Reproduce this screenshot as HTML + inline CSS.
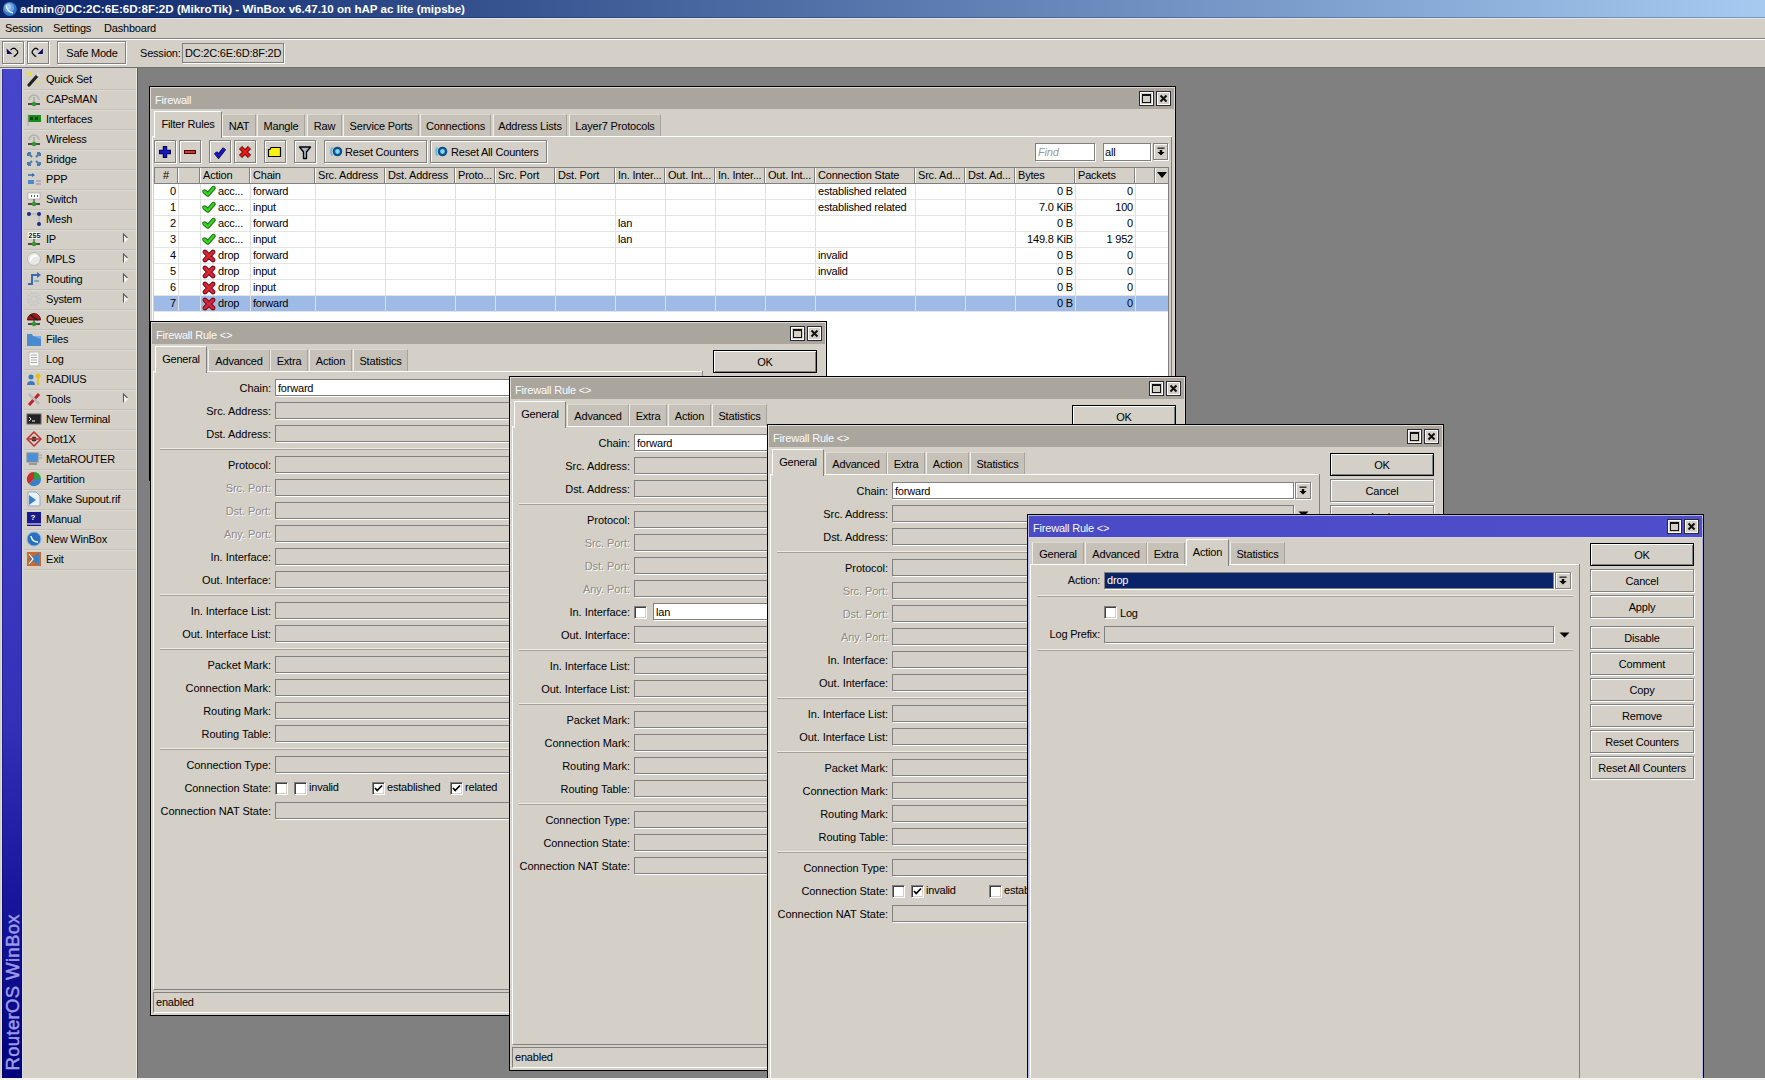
<!DOCTYPE html>
<html><head><meta charset="utf-8"><style>
html,body{margin:0;padding:0;width:1765px;height:1080px;overflow:hidden;background:#808080;}
body{position:relative;font-family:"Liberation Sans",sans-serif;font-size:11px;color:#000;}
div{position:absolute;box-sizing:border-box;}
.t{white-space:nowrap;letter-spacing:-0.2px;line-height:13px;}
svg{position:absolute;}

</style></head><body>
<div style="left:0px;top:0px;width:1765px;height:18px;background:linear-gradient(90deg,#0a246a 0%,#a6caf0 100%);box-shadow:inset 0 -1px 0 rgba(0,0,40,0.25);"></div>
<svg style="left:2px;top:1px" width="16" height="16" viewBox="0 0 16 16"><circle cx="7.8" cy="8" r="7" fill="#3574c4"/><circle cx="7" cy="6.8" r="5" fill="#6aa4e4"/><circle cx="6.4" cy="5.8" r="2.8" fill="#9cc8f4"/><path d="M4.2 4.5 Q5 10.5 11 12" stroke="#eef6ff" stroke-width="1.3" fill="none"/></svg>
<div class="t" style="left:20px;top:2px;color:#fff;font-weight:bold;font-size:11.6px;letter-spacing:0px;">admin@DC:2C:6E:6D:8F:2D (MikroTik) - WinBox v6.47.10 on hAP ac lite (mipsbe)</div>
<div style="left:0px;top:18px;width:1765px;height:20px;background:#d4d0c8;border-top:1px solid #e4e2ee;"></div>
<div class="t" style="left:5px;top:21.5px;">Session</div>
<div class="t" style="left:53px;top:21.5px;">Settings</div>
<div class="t" style="left:104px;top:21.5px;">Dashboard</div>
<div style="left:0px;top:38px;width:1765px;height:1px;background:#808080;"></div>
<div style="left:0px;top:39px;width:1765px;height:1px;background:#fff;"></div>
<div style="left:0px;top:40px;width:1765px;height:27px;background:#d4d0c8;"></div>
<div style="left:2px;top:41px;width:22px;height:23px;background:#d4d0c8;border:1px solid #808080;box-shadow:inset 1px 1px 0 #fff,1px 1px 0 #fff;"></div>
<div style="left:27px;top:41px;width:22px;height:23px;background:#d4d0c8;border:1px solid #808080;box-shadow:inset 1px 1px 0 #fff,1px 1px 0 #fff;"></div>
<svg style="left:4px;top:45px" width="16" height="16" viewBox="0 0 16 16"><path d="M2.6 3.6 L3.0 9 L8.4 9 Z" fill="#0a0a6a"/><path d="M6.6 5 L8.7 3.3 L10.7 3.3 L13.6 6.2 L13.7 8 L11 10.9 L9.6 11.5" stroke="#000" stroke-width="1.2" fill="none"/></svg>
<svg style="left:29px;top:45px" width="16" height="16" viewBox="0 0 16 16"><path d="M14.1 3.6 L13.8 9 L8.5 9 Z" fill="#0a0a6a"/><path d="M9.3 5 L7.6 3.3 L5.8 3.3 L3.2 6.2 L3.2 8 L5.8 10.9 L7.3 11.5" stroke="#000" stroke-width="1.2" fill="none"/></svg>
<div style="left:57px;top:41px;width:69px;height:23px;background:#d4d0c8;border:1px solid #808080;box-shadow:inset 1px 1px 0 #fff,1px 1px 0 #fff;"></div>
<div class="t" style="left:57px;top:47px;width:70px;text-align:center;">Safe Mode</div>
<div class="t" style="left:140px;top:47px;">Session:</div>
<div style="left:182px;top:43px;width:102px;height:20px;background:#d4d0c8;border:1px solid #808080;box-shadow:1px 1px 0 #fff;"></div>
<div class="t" style="left:185px;top:47px;">DC:2C:6E:6D:8F:2D</div>
<div style="left:0px;top:67px;width:1765px;height:1px;background:#747270;"></div>
<div style="left:0px;top:68px;width:138px;height:1010px;background:#d4d0c8;border-right:1px solid #5a5a5a;box-shadow:inset -1px 0 0 #e8e6e0;"></div>
<div style="left:1px;top:68px;width:22px;height:1010px;background:#dcdcf4;"></div>
<div style="left:2px;top:69px;width:20px;height:1009px;background:linear-gradient(180deg,#4646cc 0%,#4040c8 33%,#3331b8 64.6%,#17159a 82.4%,#02027c 100%);box-shadow:inset 1px 0 0 rgba(0,0,60,0.35),inset -1px 0 0 rgba(0,0,60,0.35);"></div>
<div class="t" style="left:-68px;top:982px;width:160px;height:17px;line-height:17px;transform:rotate(-90deg);transform-origin:center;color:#9c9ce6;-webkit-text-stroke:0.5px #9c9ce6;font-size:18.6px;letter-spacing:0.3px;">RouterOS WinBox</div>
<div class="t" style="left:46px;top:72.5px;">Quick Set</div>
<div style="left:24px;top:89px;width:112px;height:1px;background:#c4c0b8;"></div>
<div style="left:24px;top:90px;width:112px;height:1px;background:#dcdad4;"></div>
<div class="t" style="left:46px;top:92.5px;">CAPsMAN</div>
<div style="left:24px;top:109px;width:112px;height:1px;background:#c4c0b8;"></div>
<div style="left:24px;top:110px;width:112px;height:1px;background:#dcdad4;"></div>
<div class="t" style="left:46px;top:112.5px;">Interfaces</div>
<div style="left:24px;top:129px;width:112px;height:1px;background:#c4c0b8;"></div>
<div style="left:24px;top:130px;width:112px;height:1px;background:#dcdad4;"></div>
<div class="t" style="left:46px;top:132.5px;">Wireless</div>
<div style="left:24px;top:149px;width:112px;height:1px;background:#c4c0b8;"></div>
<div style="left:24px;top:150px;width:112px;height:1px;background:#dcdad4;"></div>
<div class="t" style="left:46px;top:152.5px;">Bridge</div>
<div style="left:24px;top:169px;width:112px;height:1px;background:#c4c0b8;"></div>
<div style="left:24px;top:170px;width:112px;height:1px;background:#dcdad4;"></div>
<div class="t" style="left:46px;top:172.5px;">PPP</div>
<div style="left:24px;top:189px;width:112px;height:1px;background:#c4c0b8;"></div>
<div style="left:24px;top:190px;width:112px;height:1px;background:#dcdad4;"></div>
<div class="t" style="left:46px;top:192.5px;">Switch</div>
<div style="left:24px;top:209px;width:112px;height:1px;background:#c4c0b8;"></div>
<div style="left:24px;top:210px;width:112px;height:1px;background:#dcdad4;"></div>
<div class="t" style="left:46px;top:212.5px;">Mesh</div>
<div style="left:24px;top:229px;width:112px;height:1px;background:#c4c0b8;"></div>
<div style="left:24px;top:230px;width:112px;height:1px;background:#dcdad4;"></div>
<div class="t" style="left:46px;top:232.5px;">IP</div>
<div style="left:24px;top:249px;width:112px;height:1px;background:#c4c0b8;"></div>
<div style="left:24px;top:250px;width:112px;height:1px;background:#dcdad4;"></div>
<svg style="left:122px;top:233px" width="8" height="11" viewBox="0 0 8 11"><path d="M1.5 10 L6 5.5 L1.5 1 Z" fill="#f6f4f0"/><path d="M1.5 10 V1 L5.5 5" stroke="#5a5a5a" stroke-width="1.1" fill="none"/><path d="M1.5 10 L6 5.5" stroke="#fff" stroke-width="1"/></svg>
<div class="t" style="left:46px;top:252.5px;">MPLS</div>
<div style="left:24px;top:269px;width:112px;height:1px;background:#c4c0b8;"></div>
<div style="left:24px;top:270px;width:112px;height:1px;background:#dcdad4;"></div>
<svg style="left:122px;top:253px" width="8" height="11" viewBox="0 0 8 11"><path d="M1.5 10 L6 5.5 L1.5 1 Z" fill="#f6f4f0"/><path d="M1.5 10 V1 L5.5 5" stroke="#5a5a5a" stroke-width="1.1" fill="none"/><path d="M1.5 10 L6 5.5" stroke="#fff" stroke-width="1"/></svg>
<div class="t" style="left:46px;top:272.5px;">Routing</div>
<div style="left:24px;top:289px;width:112px;height:1px;background:#c4c0b8;"></div>
<div style="left:24px;top:290px;width:112px;height:1px;background:#dcdad4;"></div>
<svg style="left:122px;top:273px" width="8" height="11" viewBox="0 0 8 11"><path d="M1.5 10 L6 5.5 L1.5 1 Z" fill="#f6f4f0"/><path d="M1.5 10 V1 L5.5 5" stroke="#5a5a5a" stroke-width="1.1" fill="none"/><path d="M1.5 10 L6 5.5" stroke="#fff" stroke-width="1"/></svg>
<div class="t" style="left:46px;top:292.5px;">System</div>
<div style="left:24px;top:309px;width:112px;height:1px;background:#c4c0b8;"></div>
<div style="left:24px;top:310px;width:112px;height:1px;background:#dcdad4;"></div>
<svg style="left:122px;top:293px" width="8" height="11" viewBox="0 0 8 11"><path d="M1.5 10 L6 5.5 L1.5 1 Z" fill="#f6f4f0"/><path d="M1.5 10 V1 L5.5 5" stroke="#5a5a5a" stroke-width="1.1" fill="none"/><path d="M1.5 10 L6 5.5" stroke="#fff" stroke-width="1"/></svg>
<div class="t" style="left:46px;top:312.5px;">Queues</div>
<div style="left:24px;top:329px;width:112px;height:1px;background:#c4c0b8;"></div>
<div style="left:24px;top:330px;width:112px;height:1px;background:#dcdad4;"></div>
<div class="t" style="left:46px;top:332.5px;">Files</div>
<div style="left:24px;top:349px;width:112px;height:1px;background:#c4c0b8;"></div>
<div style="left:24px;top:350px;width:112px;height:1px;background:#dcdad4;"></div>
<div class="t" style="left:46px;top:352.5px;">Log</div>
<div style="left:24px;top:369px;width:112px;height:1px;background:#c4c0b8;"></div>
<div style="left:24px;top:370px;width:112px;height:1px;background:#dcdad4;"></div>
<div class="t" style="left:46px;top:372.5px;">RADIUS</div>
<div style="left:24px;top:389px;width:112px;height:1px;background:#c4c0b8;"></div>
<div style="left:24px;top:390px;width:112px;height:1px;background:#dcdad4;"></div>
<div class="t" style="left:46px;top:392.5px;">Tools</div>
<div style="left:24px;top:409px;width:112px;height:1px;background:#c4c0b8;"></div>
<div style="left:24px;top:410px;width:112px;height:1px;background:#dcdad4;"></div>
<svg style="left:122px;top:393px" width="8" height="11" viewBox="0 0 8 11"><path d="M1.5 10 L6 5.5 L1.5 1 Z" fill="#f6f4f0"/><path d="M1.5 10 V1 L5.5 5" stroke="#5a5a5a" stroke-width="1.1" fill="none"/><path d="M1.5 10 L6 5.5" stroke="#fff" stroke-width="1"/></svg>
<div class="t" style="left:46px;top:412.5px;">New Terminal</div>
<div style="left:24px;top:429px;width:112px;height:1px;background:#c4c0b8;"></div>
<div style="left:24px;top:430px;width:112px;height:1px;background:#dcdad4;"></div>
<div class="t" style="left:46px;top:432.5px;">Dot1X</div>
<div style="left:24px;top:449px;width:112px;height:1px;background:#c4c0b8;"></div>
<div style="left:24px;top:450px;width:112px;height:1px;background:#dcdad4;"></div>
<div class="t" style="left:46px;top:452.5px;">MetaROUTER</div>
<div style="left:24px;top:469px;width:112px;height:1px;background:#c4c0b8;"></div>
<div style="left:24px;top:470px;width:112px;height:1px;background:#dcdad4;"></div>
<div class="t" style="left:46px;top:472.5px;">Partition</div>
<div style="left:24px;top:489px;width:112px;height:1px;background:#c4c0b8;"></div>
<div style="left:24px;top:490px;width:112px;height:1px;background:#dcdad4;"></div>
<div class="t" style="left:46px;top:492.5px;">Make Supout.rif</div>
<div style="left:24px;top:509px;width:112px;height:1px;background:#c4c0b8;"></div>
<div style="left:24px;top:510px;width:112px;height:1px;background:#dcdad4;"></div>
<div class="t" style="left:46px;top:512.5px;">Manual</div>
<div style="left:24px;top:529px;width:112px;height:1px;background:#c4c0b8;"></div>
<div style="left:24px;top:530px;width:112px;height:1px;background:#dcdad4;"></div>
<div class="t" style="left:46px;top:532.5px;">New WinBox</div>
<div style="left:24px;top:549px;width:112px;height:1px;background:#c4c0b8;"></div>
<div style="left:24px;top:550px;width:112px;height:1px;background:#dcdad4;"></div>
<div class="t" style="left:46px;top:552.5px;">Exit</div>
<div style="left:24px;top:569px;width:112px;height:1px;background:#c4c0b8;"></div>
<div style="left:24px;top:570px;width:112px;height:1px;background:#dcdad4;"></div>
<svg style="left:26px;top:71px" width="16" height="16" viewBox="0 0 16 16"><path d="M3 14 L11 5" stroke="#222" stroke-width="3.2" stroke-linecap="round"/><path d="M11 5 L13 3" stroke="#ddd" stroke-width="3"/><circle cx="4" cy="3" r="2" fill="#e8e030"/><circle cx="12" cy="12" r="1.3" fill="#e8e030"/></svg>
<svg style="left:26px;top:91px" width="16" height="16" viewBox="0 0 16 16"><path d="M3 9 A5 5 0 0 1 13 9" stroke="#b0b0b0" stroke-width="1.5" fill="none"/><path d="M8 6 L8 12" stroke="#999" stroke-width="1"/><path d="M2 13 L14 13" stroke="#222" stroke-width="1.5"/><circle cx="8" cy="13" r="2.2" fill="#2a9a2a"/></svg>
<svg style="left:26px;top:111px" width="16" height="16" viewBox="0 0 16 16"><rect x="2" y="4" width="13" height="7" fill="#1a8a1a"/><rect x="4" y="6" width="3" height="3" fill="#0a4a0a"/><rect x="9" y="6" width="3" height="3" fill="#0a4a0a"/><path d="M2 3 L2 15" stroke="#aaa"/></svg>
<svg style="left:26px;top:131px" width="16" height="16" viewBox="0 0 16 16"><path d="M3 9 A5 5 0 0 1 13 9" stroke="#b0b0b0" stroke-width="1.5" fill="none"/><path d="M8 6 L8 12" stroke="#999" stroke-width="1"/><path d="M2 13 L14 13" stroke="#222" stroke-width="1.5"/><circle cx="8" cy="13" r="2.2" fill="#2a9a2a"/></svg>
<svg style="left:26px;top:151px" width="16" height="16" viewBox="0 0 16 16"><path d="M2 2 L6 6 M14 2 L10 6 M2 14 L6 10 M14 14 L10 10" stroke="#4a7ab0" stroke-width="2"/><path d="M2 2 L5 2 M2 2 L2 5 M14 2 L11 2 M14 2 L14 5 M2 14 L5 14 M2 14 L2 11 M14 14 L11 14 M14 14 L14 11" stroke="#4a7ab0" stroke-width="2"/></svg>
<svg style="left:26px;top:171px" width="16" height="16" viewBox="0 0 16 16"><path d="M2 4 L8 4" stroke="#3a6ab0" stroke-width="1.5"/><path d="M6 2 L9 4 L6 6" fill="#3a6ab0"/><rect x="2" y="9" width="6" height="4" fill="#4a8ad0"/><path d="M10 10 L15 10 M10 13 L15 13" stroke="#88a" stroke-width="1"/></svg>
<svg style="left:26px;top:191px" width="16" height="16" viewBox="0 0 16 16"><rect x="2" y="2" width="12" height="6" fill="#fff" stroke="#aaa" stroke-width="0.8"/><path d="M5 5 L6 5 M8 5 L9 5 M11 5 L12 5" stroke="#222" stroke-width="1.5"/><path d="M8 8 L8 12" stroke="#333"/><path d="M2 13 L14 13" stroke="#222" stroke-width="1.5"/><circle cx="8" cy="13" r="2.2" fill="#2a9a2a"/></svg>
<svg style="left:26px;top:211px" width="16" height="16" viewBox="0 0 16 16"><circle cx="3" cy="3" r="2" fill="#1a2a8a"/><circle cx="13" cy="3" r="2" fill="#1a2a8a"/><circle cx="13" cy="13" r="2" fill="#1a2a8a"/><path d="M5 3 L11 3 M13 5 L13 11" stroke="#aab" stroke-width="1"/></svg>
<svg style="left:26px;top:231px" width="16" height="16" viewBox="0 0 16 16"><rect x="1.5" y="1" width="13" height="7" fill="#fff" stroke="#ccc" stroke-width="0.6"/><text x="2.2" y="7.2" font-size="7" font-family="Liberation Mono" font-weight="bold" fill="#111">255</text><path d="M8 8 L8 12" stroke="#333"/><path d="M2 13 L14 13" stroke="#222" stroke-width="1.5"/><circle cx="8" cy="13" r="2.2" fill="#2a9a2a"/></svg>
<svg style="left:26px;top:251px" width="16" height="16" viewBox="0 0 16 16"><ellipse cx="8" cy="8" rx="6.5" ry="6.5" fill="#e8e8e8" stroke="#bbb"/><path d="M4 10 Q6 4 11 5" stroke="#fff" stroke-width="2" fill="none"/></svg>
<svg style="left:26px;top:271px" width="16" height="16" viewBox="0 0 16 16"><path d="M2 13 L6 13 L6 4 L12 4" stroke="#3a6ab0" stroke-width="2" fill="none"/><path d="M11 1 L15 4 L11 7 Z" fill="#3a6ab0"/><path d="M8 10 L13 10" stroke="#8ab" stroke-width="2"/></svg>
<svg style="left:26px;top:291px" width="16" height="16" viewBox="0 0 16 16"><circle cx="8" cy="8" r="6" fill="none" stroke="#c8c8c8" stroke-width="2.5" stroke-dasharray="2 1.5"/><circle cx="8" cy="8" r="3" fill="none" stroke="#c8c8c8" stroke-width="1.5"/></svg>
<svg style="left:26px;top:311px" width="16" height="16" viewBox="0 0 16 16"><path d="M1.5 9 A6.5 6.5 0 0 1 14.5 9 Z" fill="#b01818" stroke="#300" stroke-width="0.8"/><path d="M4 4 L12 9" stroke="#222" stroke-width="1.6"/><path d="M8 8 L8 12" stroke="#333"/><path d="M2 13 L14 13" stroke="#222" stroke-width="1.5"/><circle cx="8" cy="13" r="2.2" fill="#2a9a2a"/></svg>
<svg style="left:26px;top:331px" width="16" height="16" viewBox="0 0 16 16"><path d="M1 3 L6 3 L7 5 L15 5 L15 15 L1 15 Z" fill="#4a8ad0"/><path d="M7 5 L15 5 L15 8 Z" fill="#7ab0e8"/></svg>
<svg style="left:26px;top:351px" width="16" height="16" viewBox="0 0 16 16"><rect x="3" y="1" width="10" height="14" fill="#f8f8f8" stroke="#bbb"/><path d="M5 4 H11 M5 6.5 H11 M5 9 H11 M5 11.5 H11" stroke="#aaa"/></svg>
<svg style="left:26px;top:371px" width="16" height="16" viewBox="0 0 16 16"><circle cx="5" cy="6" r="2.5" fill="#3a7ac0"/><path d="M1 14 A4 4 0 0 1 9 14 Z" fill="#3a7ac0"/><circle cx="12" cy="5" r="2.5" fill="#e8c020"/><path d="M12 7 L12 14" stroke="#e8c020" stroke-width="2"/></svg>
<svg style="left:26px;top:391px" width="16" height="16" viewBox="0 0 16 16"><path d="M3 14 L13 3" stroke="#c02030" stroke-width="3"/><path d="M3 3 L13 13" stroke="#b8b8b8" stroke-width="2.5"/></svg>
<svg style="left:26px;top:411px" width="16" height="16" viewBox="0 0 16 16"><rect x="1" y="3" width="14" height="10" fill="#222" stroke="#666"/><path d="M3 6 L5 8 L3 10 M6 10 H9" stroke="#fff" stroke-width="1"/></svg>
<svg style="left:26px;top:431px" width="16" height="16" viewBox="0 0 16 16"><path d="M8 1 L15 8 L8 15 L1 8 Z" fill="none" stroke="#c03030" stroke-width="1.5"/><circle cx="8" cy="8" r="2.5" fill="#333"/><path d="M1 8 H15" stroke="#c03030" stroke-width="1.5"/></svg>
<svg style="left:26px;top:451px" width="16" height="16" viewBox="0 0 16 16"><rect x="1" y="2" width="11" height="9" fill="#4a90d8" stroke="#888"/><path d="M3 13 H11" stroke="#888" stroke-width="1.5"/><path d="M13 4 H16 M13 7 H16" stroke="#999"/></svg>
<svg style="left:26px;top:471px" width="16" height="16" viewBox="0 0 16 16"><path d="M8 8 L8 1 A7 7 0 0 1 15 8 Z" fill="#30a030"/><path d="M8 8 L15 8 A7 7 0 0 1 3 13 Z" fill="#3a80c8"/><path d="M8 8 L3 13 A7 7 0 0 1 8 1 Z" fill="#c83030"/></svg>
<svg style="left:26px;top:491px" width="16" height="16" viewBox="0 0 16 16"><path d="M2 1 L10 1 L14 5 L14 15 L2 15 Z" fill="#e8f0f8" stroke="#9ab"/><path d="M3 4 L10 9 L3 14 Z" fill="#3a80c8"/></svg>
<svg style="left:26px;top:511px" width="16" height="16" viewBox="0 0 16 16"><rect x="1" y="1" width="14" height="12" fill="#1a1a8a"/><rect x="1" y="13" width="14" height="2" fill="#1a1a8a"/><path d="M1 13 H15" stroke="#fff"/><text x="4.5" y="9" font-size="8" font-family="Liberation Sans" font-weight="bold" fill="#fff">?</text></svg>
<svg style="left:26px;top:531px" width="16" height="16" viewBox="0 0 16 16"><circle cx="8" cy="8" r="7" fill="#2a70c0"/><circle cx="8" cy="8" r="7" fill="none" stroke="#8ab8e8"/><path d="M5 5 Q6 11 12 11" stroke="#fff" stroke-width="1.5" fill="none"/></svg>
<svg style="left:26px;top:551px" width="16" height="16" viewBox="0 0 16 16"><rect x="1" y="1" width="14" height="14" fill="#c86a30"/><path d="M3 8 L13 2 L13 14 Z" fill="#3a80c8"/><path d="M3 3 L7 8 L3 13" stroke="#fff" stroke-width="1.2" fill="none"/></svg>
<div style="left:149px;top:86px;width:1027px;height:395px;background:#d4d0c8;border:1px solid #000;"></div>
<div style="left:150px;top:87px;width:1025px;height:1px;background:#dedad2;"></div>
<div style="left:150px;top:87px;width:1px;height:393px;background:#dedad2;"></div>
<div style="left:1174px;top:87px;width:1px;height:393px;background:#dedad2;"></div>
<div style="left:151px;top:88px;width:1023px;height:21px;background:#aaa69e;"></div>
<div class="t" style="left:155px;top:94px;color:#fafafa;">Firewall</div>
<div style="left:1139px;top:91px;width:15px;height:15px;background:#d4d0c8;border:1px solid #2a2a34;box-shadow:inset 0 0 0 1px #fff;"></div>
<svg style="left:1139px;top:91px" width="15" height="15" viewBox="0 0 15 15"><rect x="3.5" y="4" width="8" height="7.5" fill="none" stroke="#111" stroke-width="1"/><path d="M3 4 H12" stroke="#111" stroke-width="2"/></svg>
<div style="left:1156px;top:91px;width:15px;height:15px;background:#d4d0c8;border:1px solid #2a2a34;box-shadow:inset 0 0 0 1px #fff;"></div>
<svg style="left:1156px;top:91px" width="15" height="15" viewBox="0 0 15 15"><path d="M4.5 4.5 L10.5 10.5 M10.5 4.5 L4.5 10.5" stroke="#111" stroke-width="2"/></svg>
<div style="left:152px;top:136px;width:1020px;height:330px;background:#d4d0c8;border-left:1px solid #fff;border-right:1px solid #808080;"></div>
<div style="left:152px;top:136px;width:3px;height:1px;background:#fff;"></div>
<div style="left:221px;top:136px;width:951px;height:1px;background:#fff;"></div>
<div style="left:222px;top:114px;width:34px;height:22px;background:#c6c2ba;border-left:1px solid #f0eee8;border-top:1px solid #dcd8d0;border-right:1px solid #a8a49c;"></div>
<div class="t" style="left:222px;top:119.5px;width:34px;text-align:center;">NAT</div>
<div style="left:257px;top:114px;width:48px;height:22px;background:#c6c2ba;border-left:1px solid #f0eee8;border-top:1px solid #dcd8d0;border-right:1px solid #a8a49c;"></div>
<div class="t" style="left:257px;top:119.5px;width:48px;text-align:center;">Mangle</div>
<div style="left:307px;top:114px;width:35px;height:22px;background:#c6c2ba;border-left:1px solid #f0eee8;border-top:1px solid #dcd8d0;border-right:1px solid #a8a49c;"></div>
<div class="t" style="left:307px;top:119.5px;width:35px;text-align:center;">Raw</div>
<div style="left:343px;top:114px;width:76px;height:22px;background:#c6c2ba;border-left:1px solid #f0eee8;border-top:1px solid #dcd8d0;border-right:1px solid #a8a49c;"></div>
<div class="t" style="left:343px;top:119.5px;width:76px;text-align:center;">Service Ports</div>
<div style="left:420px;top:114px;width:71px;height:22px;background:#c6c2ba;border-left:1px solid #f0eee8;border-top:1px solid #dcd8d0;border-right:1px solid #a8a49c;"></div>
<div class="t" style="left:420px;top:119.5px;width:71px;text-align:center;">Connections</div>
<div style="left:493px;top:114px;width:74px;height:22px;background:#c6c2ba;border-left:1px solid #f0eee8;border-top:1px solid #dcd8d0;border-right:1px solid #a8a49c;"></div>
<div class="t" style="left:493px;top:119.5px;width:74px;text-align:center;">Address Lists</div>
<div style="left:569px;top:114px;width:92px;height:22px;background:#c6c2ba;border-left:1px solid #f0eee8;border-top:1px solid #dcd8d0;border-right:1px solid #a8a49c;"></div>
<div class="t" style="left:569px;top:119.5px;width:92px;text-align:center;">Layer7 Protocols</div>
<div style="left:154px;top:111px;width:68px;height:27px;background:#d4d0c8;border-left:1px solid #fff;border-top:1px solid #fff;border-right:1px solid #808080;"></div>
<div class="t" style="left:154px;top:117.5px;width:68px;text-align:center;">Filter Rules</div>
<div style="left:154px;top:140px;width:22px;height:23px;background:#d4d0c8;border:1px solid #808080;box-shadow:inset 1px 1px 0 #fff,1px 1px 0 #fff;"></div>
<div style="left:179px;top:140px;width:22px;height:23px;background:#d4d0c8;border:1px solid #808080;box-shadow:inset 1px 1px 0 #fff,1px 1px 0 #fff;"></div>
<div style="left:209px;top:140px;width:22px;height:23px;background:#d4d0c8;border:1px solid #808080;box-shadow:inset 1px 1px 0 #fff,1px 1px 0 #fff;"></div>
<div style="left:234px;top:140px;width:22px;height:23px;background:#d4d0c8;border:1px solid #808080;box-shadow:inset 1px 1px 0 #fff,1px 1px 0 #fff;"></div>
<div style="left:264px;top:140px;width:22px;height:23px;background:#d4d0c8;border:1px solid #808080;box-shadow:inset 1px 1px 0 #fff,1px 1px 0 #fff;"></div>
<div style="left:294px;top:140px;width:22px;height:23px;background:#d4d0c8;border:1px solid #808080;box-shadow:inset 1px 1px 0 #fff,1px 1px 0 #fff;"></div>
<div style="left:324px;top:140px;width:103px;height:23px;background:#d4d0c8;border:1px solid #808080;box-shadow:inset 1px 1px 0 #fff,1px 1px 0 #fff;"></div>
<div style="left:430px;top:140px;width:117px;height:23px;background:#d4d0c8;border:1px solid #808080;box-shadow:inset 1px 1px 0 #fff,1px 1px 0 #fff;"></div>
<svg style="left:157px;top:144px" width="16" height="16" viewBox="0 0 16 16"><path d="M8 2 V14 M2 8 H14" stroke="#000050" stroke-width="4.4"/><path d="M8 3 V13 M3 8 H13" stroke="#1818c8" stroke-width="2.4"/></svg>
<svg style="left:182px;top:144px" width="16" height="16" viewBox="0 0 16 16"><rect x="2.5" y="6.5" width="11" height="3" fill="#c04040" stroke="#500000" stroke-width="1"/></svg>
<svg style="left:212px;top:144px" width="16" height="16" viewBox="0 0 16 16"><path d="M3.5 8.5 L6.5 12 L12.5 4.5" stroke="#000060" stroke-width="4" fill="none"/><path d="M3.5 8.5 L6.5 12 L12.5 4.5" stroke="#1a1ac0" stroke-width="2.4" fill="none"/></svg>
<svg style="left:237px;top:144px" width="16" height="16" viewBox="0 0 16 16"><path d="M3.5 3.5 L12.5 12.5 M12.5 3.5 L3.5 12.5" stroke="#600000" stroke-width="4.4"/><path d="M3.8 3.8 L12.2 12.2 M12.2 3.8 L3.8 12.2" stroke="#e81818" stroke-width="2.6"/></svg>
<svg style="left:267px;top:144px" width="16" height="16" viewBox="0 0 16 16"><path d="M1.5 5.5 L3 5.5 L4 3.5 L13.5 3.5 L13.5 12.5 L1.5 12.5 Z" fill="#f8f010" stroke="#000" stroke-width="1.2"/></svg>
<svg style="left:297px;top:144px" width="16" height="16" viewBox="0 0 16 16"><path d="M2.5 3 H13.5 L9.5 8 V14.5 H6.5 V8 Z" fill="#aab4c8" stroke="#000" stroke-width="1.3" stroke-linejoin="round"/></svg>
<svg style="left:328px;top:144px" width="16" height="16" viewBox="0 0 16 16"><circle cx="9.5" cy="7.5" r="3.6" fill="#7ad8f8" stroke="#10508a" stroke-width="2.4"/><path d="M4.5 3.5 A6 6 0 0 0 4.5 11.5" stroke="#68b8e8" stroke-width="2" fill="none"/></svg>
<svg style="left:433px;top:144px" width="16" height="16" viewBox="0 0 16 16"><circle cx="9.5" cy="7.5" r="3.6" fill="#7ad8f8" stroke="#10508a" stroke-width="2.4"/><path d="M4.5 3.5 A6 6 0 0 0 4.5 11.5" stroke="#68b8e8" stroke-width="2" fill="none"/></svg>
<div class="t" style="left:345px;top:145.5px;">Reset Counters</div>
<div class="t" style="left:451px;top:145.5px;">Reset All Counters</div>
<div style="left:1035px;top:143px;width:60px;height:18px;background:#fff;border:1px solid #808080;box-shadow:1px 1px 0 #fff;"></div>
<div class="t" style="left:1038px;top:146px;color:#9a9a9a;font-style:italic;">Find</div>
<div style="left:1103px;top:143px;width:48px;height:18px;background:#fff;border:1px solid #808080;box-shadow:1px 1px 0 #fff;"></div>
<div class="t" style="left:1105px;top:146px;">all</div>
<div style="left:1153px;top:143px;width:15px;height:17px;background:#d4d0c8;border:1px solid #808080;box-shadow:inset 1px 1px 0 #fff,1px 1px 0 #fff;"></div>
<svg style="left:1155px;top:145px" width="12" height="14" viewBox="0 0 12 14"><rect x="2.5" y="2.6" width="7" height="1.1" fill="#000"/><path d="M4.8 5 H7.2 V7 H9.6 L6 10.6 L2.4 7 H4.8 Z" fill="#000"/></svg>
<div style="left:154px;top:167px;width:1015px;height:300px;background:#fff;"></div>
<div style="left:154px;top:167px;width:1015px;height:17px;background:#d4d0c8;border-top:1px solid #808080;border-bottom:1px solid #808080;"></div>
<div style="left:154px;top:168px;width:24px;height:15px;border-left:1px solid #fff;border-right:1px solid #808080;"></div>
<div class="t" style="left:154px;top:169px;width:24px;text-align:center;">#</div>
<div style="left:178px;top:168px;width:22px;height:15px;border-left:1px solid #fff;border-right:1px solid #808080;"></div>
<div style="left:200px;top:168px;width:50px;height:15px;border-left:1px solid #fff;border-right:1px solid #808080;"></div>
<div class="t" style="left:203px;top:169px;">Action</div>
<div style="left:250px;top:168px;width:65px;height:15px;border-left:1px solid #fff;border-right:1px solid #808080;"></div>
<div class="t" style="left:253px;top:169px;">Chain</div>
<div style="left:315px;top:168px;width:70px;height:15px;border-left:1px solid #fff;border-right:1px solid #808080;"></div>
<div class="t" style="left:318px;top:169px;">Src. Address</div>
<div style="left:385px;top:168px;width:70px;height:15px;border-left:1px solid #fff;border-right:1px solid #808080;"></div>
<div class="t" style="left:388px;top:169px;">Dst. Address</div>
<div style="left:455px;top:168px;width:40px;height:15px;border-left:1px solid #fff;border-right:1px solid #808080;"></div>
<div class="t" style="left:458px;top:169px;">Proto...</div>
<div style="left:495px;top:168px;width:60px;height:15px;border-left:1px solid #fff;border-right:1px solid #808080;"></div>
<div class="t" style="left:498px;top:169px;">Src. Port</div>
<div style="left:555px;top:168px;width:60px;height:15px;border-left:1px solid #fff;border-right:1px solid #808080;"></div>
<div class="t" style="left:558px;top:169px;">Dst. Port</div>
<div style="left:615px;top:168px;width:50px;height:15px;border-left:1px solid #fff;border-right:1px solid #808080;"></div>
<div class="t" style="left:618px;top:169px;">In. Inter...</div>
<div style="left:665px;top:168px;width:50px;height:15px;border-left:1px solid #fff;border-right:1px solid #808080;"></div>
<div class="t" style="left:668px;top:169px;">Out. Int...</div>
<div style="left:715px;top:168px;width:50px;height:15px;border-left:1px solid #fff;border-right:1px solid #808080;"></div>
<div class="t" style="left:718px;top:169px;">In. Inter...</div>
<div style="left:765px;top:168px;width:50px;height:15px;border-left:1px solid #fff;border-right:1px solid #808080;"></div>
<div class="t" style="left:768px;top:169px;">Out. Int...</div>
<div style="left:815px;top:168px;width:100px;height:15px;border-left:1px solid #fff;border-right:1px solid #808080;"></div>
<div class="t" style="left:818px;top:169px;">Connection State</div>
<div style="left:915px;top:168px;width:50px;height:15px;border-left:1px solid #fff;border-right:1px solid #808080;"></div>
<div class="t" style="left:918px;top:169px;">Src. Ad...</div>
<div style="left:965px;top:168px;width:50px;height:15px;border-left:1px solid #fff;border-right:1px solid #808080;"></div>
<div class="t" style="left:968px;top:169px;">Dst. Ad...</div>
<div style="left:1015px;top:168px;width:60px;height:15px;border-left:1px solid #fff;border-right:1px solid #808080;"></div>
<div class="t" style="left:1018px;top:169px;">Bytes</div>
<div style="left:1075px;top:168px;width:60px;height:15px;border-left:1px solid #fff;border-right:1px solid #808080;"></div>
<div class="t" style="left:1078px;top:169px;">Packets</div>
<div style="left:1135px;top:168px;width:20px;height:15px;border-left:1px solid #fff;border-right:1px solid #808080;"></div>
<div style="left:1155px;top:168px;width:14px;height:15px;border-left:1px solid #fff;border-right:1px solid #808080;"></div>
<div style="left:154px;top:167px;width:1px;height:17px;background:#808080;"></div>
<svg style="left:1156px;top:170px" width="12" height="10" viewBox="0 0 12 10"><path d="M1 2 H11 L6 8 Z" fill="#000"/></svg>
<div style="left:154px;top:199px;width:1015px;height:1px;background:#e4e4e4;"></div>
<div class="t" style="left:154px;top:184.5px;width:22px;text-align:right;">0</div>
<svg style="left:202px;top:185px" width="14" height="13" viewBox="0 0 14 13"><path d="M2.5 6.5 L5.8 9.5 L11.5 3" stroke="#187818" stroke-width="4.4" fill="none" stroke-linejoin="round" stroke-linecap="round"/><path d="M2.5 6.5 L5.8 9.5 L11.5 3" stroke="#3cd21e" stroke-width="2.4" fill="none" stroke-linejoin="round" stroke-linecap="round"/></svg>
<div class="t" style="left:218px;top:184.5px;">acc...</div>
<div class="t" style="left:253px;top:184.5px;">forward</div>
<div class="t" style="left:818px;top:184.5px;">established related</div>
<div class="t" style="left:1015px;top:184.5px;width:58px;text-align:right;">0 B</div>
<div class="t" style="left:1075px;top:184.5px;width:58px;text-align:right;">0</div>
<div style="left:154px;top:215px;width:1015px;height:1px;background:#e4e4e4;"></div>
<div class="t" style="left:154px;top:200.5px;width:22px;text-align:right;">1</div>
<svg style="left:202px;top:201px" width="14" height="13" viewBox="0 0 14 13"><path d="M2.5 6.5 L5.8 9.5 L11.5 3" stroke="#187818" stroke-width="4.4" fill="none" stroke-linejoin="round" stroke-linecap="round"/><path d="M2.5 6.5 L5.8 9.5 L11.5 3" stroke="#3cd21e" stroke-width="2.4" fill="none" stroke-linejoin="round" stroke-linecap="round"/></svg>
<div class="t" style="left:218px;top:200.5px;">acc...</div>
<div class="t" style="left:253px;top:200.5px;">input</div>
<div class="t" style="left:818px;top:200.5px;">established related</div>
<div class="t" style="left:1015px;top:200.5px;width:58px;text-align:right;">7.0 KiB</div>
<div class="t" style="left:1075px;top:200.5px;width:58px;text-align:right;">100</div>
<div style="left:154px;top:231px;width:1015px;height:1px;background:#e4e4e4;"></div>
<div class="t" style="left:154px;top:216.5px;width:22px;text-align:right;">2</div>
<svg style="left:202px;top:217px" width="14" height="13" viewBox="0 0 14 13"><path d="M2.5 6.5 L5.8 9.5 L11.5 3" stroke="#187818" stroke-width="4.4" fill="none" stroke-linejoin="round" stroke-linecap="round"/><path d="M2.5 6.5 L5.8 9.5 L11.5 3" stroke="#3cd21e" stroke-width="2.4" fill="none" stroke-linejoin="round" stroke-linecap="round"/></svg>
<div class="t" style="left:218px;top:216.5px;">acc...</div>
<div class="t" style="left:253px;top:216.5px;">forward</div>
<div class="t" style="left:618px;top:216.5px;">lan</div>
<div class="t" style="left:1015px;top:216.5px;width:58px;text-align:right;">0 B</div>
<div class="t" style="left:1075px;top:216.5px;width:58px;text-align:right;">0</div>
<div style="left:154px;top:247px;width:1015px;height:1px;background:#e4e4e4;"></div>
<div class="t" style="left:154px;top:232.5px;width:22px;text-align:right;">3</div>
<svg style="left:202px;top:233px" width="14" height="13" viewBox="0 0 14 13"><path d="M2.5 6.5 L5.8 9.5 L11.5 3" stroke="#187818" stroke-width="4.4" fill="none" stroke-linejoin="round" stroke-linecap="round"/><path d="M2.5 6.5 L5.8 9.5 L11.5 3" stroke="#3cd21e" stroke-width="2.4" fill="none" stroke-linejoin="round" stroke-linecap="round"/></svg>
<div class="t" style="left:218px;top:232.5px;">acc...</div>
<div class="t" style="left:253px;top:232.5px;">input</div>
<div class="t" style="left:618px;top:232.5px;">lan</div>
<div class="t" style="left:1015px;top:232.5px;width:58px;text-align:right;">149.8 KiB</div>
<div class="t" style="left:1075px;top:232.5px;width:58px;text-align:right;">1 952</div>
<div style="left:154px;top:263px;width:1015px;height:1px;background:#e4e4e4;"></div>
<div class="t" style="left:154px;top:248.5px;width:22px;text-align:right;">4</div>
<svg style="left:202px;top:249px" width="14" height="14" viewBox="0 0 14 14"><path d="M3 3 L11 11 M11 3 L3 11" stroke="#700010" stroke-width="4.6" stroke-linecap="round"/><path d="M3 3 L11 11 M11 3 L3 11" stroke="#d82838" stroke-width="2.8" stroke-linecap="round"/></svg>
<div class="t" style="left:218px;top:248.5px;">drop</div>
<div class="t" style="left:253px;top:248.5px;">forward</div>
<div class="t" style="left:818px;top:248.5px;">invalid</div>
<div class="t" style="left:1015px;top:248.5px;width:58px;text-align:right;">0 B</div>
<div class="t" style="left:1075px;top:248.5px;width:58px;text-align:right;">0</div>
<div style="left:154px;top:279px;width:1015px;height:1px;background:#e4e4e4;"></div>
<div class="t" style="left:154px;top:264.5px;width:22px;text-align:right;">5</div>
<svg style="left:202px;top:265px" width="14" height="14" viewBox="0 0 14 14"><path d="M3 3 L11 11 M11 3 L3 11" stroke="#700010" stroke-width="4.6" stroke-linecap="round"/><path d="M3 3 L11 11 M11 3 L3 11" stroke="#d82838" stroke-width="2.8" stroke-linecap="round"/></svg>
<div class="t" style="left:218px;top:264.5px;">drop</div>
<div class="t" style="left:253px;top:264.5px;">input</div>
<div class="t" style="left:818px;top:264.5px;">invalid</div>
<div class="t" style="left:1015px;top:264.5px;width:58px;text-align:right;">0 B</div>
<div class="t" style="left:1075px;top:264.5px;width:58px;text-align:right;">0</div>
<div style="left:154px;top:295px;width:1015px;height:1px;background:#e4e4e4;"></div>
<div class="t" style="left:154px;top:280.5px;width:22px;text-align:right;">6</div>
<svg style="left:202px;top:281px" width="14" height="14" viewBox="0 0 14 14"><path d="M3 3 L11 11 M11 3 L3 11" stroke="#700010" stroke-width="4.6" stroke-linecap="round"/><path d="M3 3 L11 11 M11 3 L3 11" stroke="#d82838" stroke-width="2.8" stroke-linecap="round"/></svg>
<div class="t" style="left:218px;top:280.5px;">drop</div>
<div class="t" style="left:253px;top:280.5px;">input</div>
<div class="t" style="left:1015px;top:280.5px;width:58px;text-align:right;">0 B</div>
<div class="t" style="left:1075px;top:280.5px;width:58px;text-align:right;">0</div>
<div style="left:154px;top:296px;width:1015px;height:16px;background:#9dbbe6;"></div>
<div style="left:154px;top:311px;width:1015px;height:1px;background:#e4e4e4;"></div>
<div class="t" style="left:154px;top:296.5px;width:22px;text-align:right;">7</div>
<svg style="left:202px;top:297px" width="14" height="14" viewBox="0 0 14 14"><path d="M3 3 L11 11 M11 3 L3 11" stroke="#700010" stroke-width="4.6" stroke-linecap="round"/><path d="M3 3 L11 11 M11 3 L3 11" stroke="#d82838" stroke-width="2.8" stroke-linecap="round"/></svg>
<div class="t" style="left:218px;top:296.5px;">drop</div>
<div class="t" style="left:253px;top:296.5px;">forward</div>
<div class="t" style="left:1015px;top:296.5px;width:58px;text-align:right;">0 B</div>
<div class="t" style="left:1075px;top:296.5px;width:58px;text-align:right;">0</div>
<div style="left:178px;top:184px;width:1px;height:128px;background:#e0e0e0;"></div>
<div style="left:200px;top:184px;width:1px;height:128px;background:#e0e0e0;"></div>
<div style="left:250px;top:184px;width:1px;height:128px;background:#e0e0e0;"></div>
<div style="left:315px;top:184px;width:1px;height:128px;background:#e0e0e0;"></div>
<div style="left:385px;top:184px;width:1px;height:128px;background:#e0e0e0;"></div>
<div style="left:455px;top:184px;width:1px;height:128px;background:#e0e0e0;"></div>
<div style="left:495px;top:184px;width:1px;height:128px;background:#e0e0e0;"></div>
<div style="left:555px;top:184px;width:1px;height:128px;background:#e0e0e0;"></div>
<div style="left:615px;top:184px;width:1px;height:128px;background:#e0e0e0;"></div>
<div style="left:665px;top:184px;width:1px;height:128px;background:#e0e0e0;"></div>
<div style="left:715px;top:184px;width:1px;height:128px;background:#e0e0e0;"></div>
<div style="left:765px;top:184px;width:1px;height:128px;background:#e0e0e0;"></div>
<div style="left:815px;top:184px;width:1px;height:128px;background:#e0e0e0;"></div>
<div style="left:915px;top:184px;width:1px;height:128px;background:#e0e0e0;"></div>
<div style="left:965px;top:184px;width:1px;height:128px;background:#e0e0e0;"></div>
<div style="left:1015px;top:184px;width:1px;height:128px;background:#e0e0e0;"></div>
<div style="left:1075px;top:184px;width:1px;height:128px;background:#e0e0e0;"></div>
<div style="left:1135px;top:184px;width:1px;height:128px;background:#e0e0e0;"></div>
<div style="left:1168px;top:167px;width:1px;height:300px;background:#808080;"></div>
<div style="left:150px;top:321px;width:677px;height:695px;background:#d4d0c8;border:1px solid #000;"></div>
<div style="left:151px;top:322px;width:675px;height:1px;background:#dedad2;"></div>
<div style="left:151px;top:322px;width:1px;height:693px;background:#dedad2;"></div>
<div style="left:825px;top:322px;width:1px;height:693px;background:#dedad2;"></div>
<div style="left:152px;top:323px;width:673px;height:21px;background:#aaa69e;"></div>
<div class="t" style="left:156px;top:329px;color:#fafafa;">Firewall Rule &lt;&gt;</div>
<div style="left:790px;top:326px;width:15px;height:15px;background:#d4d0c8;border:1px solid #2a2a34;box-shadow:inset 0 0 0 1px #fff;"></div>
<svg style="left:790px;top:326px" width="15" height="15" viewBox="0 0 15 15"><rect x="3.5" y="4" width="8" height="7.5" fill="none" stroke="#111" stroke-width="1"/><path d="M3 4 H12" stroke="#111" stroke-width="2"/></svg>
<div style="left:807px;top:326px;width:15px;height:15px;background:#d4d0c8;border:1px solid #2a2a34;box-shadow:inset 0 0 0 1px #fff;"></div>
<svg style="left:807px;top:326px" width="15" height="15" viewBox="0 0 15 15"><path d="M4.5 4.5 L10.5 10.5 M10.5 4.5 L4.5 10.5" stroke="#111" stroke-width="2"/></svg>
<div style="left:153px;top:371px;width:550px;height:619px;background:#d4d0c8;border-left:1px solid #fff;border-right:1px solid #808080;border-bottom:1px solid #808080;"></div>
<div style="left:153px;top:371px;width:3px;height:1px;background:#fff;"></div>
<div style="left:206px;top:371px;width:496px;height:1px;background:#fff;"></div>
<div style="left:208px;top:349px;width:62px;height:22px;background:#c6c2ba;border-left:1px solid #f0eee8;border-top:1px solid #dcd8d0;border-right:1px solid #a8a49c;"></div>
<div class="t" style="left:208px;top:354.5px;width:62px;text-align:center;">Advanced</div>
<div style="left:270px;top:349px;width:38px;height:22px;background:#c6c2ba;border-left:1px solid #f0eee8;border-top:1px solid #dcd8d0;border-right:1px solid #a8a49c;"></div>
<div class="t" style="left:270px;top:354.5px;width:38px;text-align:center;">Extra</div>
<div style="left:309px;top:349px;width:43px;height:22px;background:#c6c2ba;border-left:1px solid #f0eee8;border-top:1px solid #dcd8d0;border-right:1px solid #a8a49c;"></div>
<div class="t" style="left:309px;top:354.5px;width:43px;text-align:center;">Action</div>
<div style="left:353px;top:349px;width:55px;height:22px;background:#c6c2ba;border-left:1px solid #f0eee8;border-top:1px solid #dcd8d0;border-right:1px solid #a8a49c;"></div>
<div class="t" style="left:353px;top:354.5px;width:55px;text-align:center;">Statistics</div>
<div style="left:155px;top:346px;width:52px;height:27px;background:#d4d0c8;border-left:1px solid #fff;border-top:1px solid #fff;border-right:1px solid #808080;"></div>
<div class="t" style="left:155px;top:352.5px;width:52px;text-align:center;">General</div>
<div style="left:713px;top:350px;width:104px;height:23px;background:#d4d0c8;border:1px solid #000;box-shadow:inset 1px 1px 0 #fff,inset -1px -1px 0 #808080;"></div>
<div class="t" style="left:713px;top:355.5px;width:104px;text-align:center;">OK</div>
<div style="left:713px;top:376px;width:104px;height:23px;background:#d4d0c8;border:1px solid #808080;box-shadow:inset 1px 1px 0 #fff,1px 1px 0 #fff;"></div>
<div class="t" style="left:713px;top:381.5px;width:104px;text-align:center;">Cancel</div>
<div style="left:713px;top:402px;width:104px;height:23px;background:#d4d0c8;border:1px solid #808080;box-shadow:inset 1px 1px 0 #fff,1px 1px 0 #fff;"></div>
<div class="t" style="left:713px;top:407.5px;width:104px;text-align:center;">Apply</div>
<div style="left:713px;top:433px;width:104px;height:23px;background:#d4d0c8;border:1px solid #808080;box-shadow:inset 1px 1px 0 #fff,1px 1px 0 #fff;"></div>
<div class="t" style="left:713px;top:438.5px;width:104px;text-align:center;">Disable</div>
<div style="left:713px;top:459px;width:104px;height:23px;background:#d4d0c8;border:1px solid #808080;box-shadow:inset 1px 1px 0 #fff,1px 1px 0 #fff;"></div>
<div class="t" style="left:713px;top:464.5px;width:104px;text-align:center;">Comment</div>
<div style="left:713px;top:485px;width:104px;height:23px;background:#d4d0c8;border:1px solid #808080;box-shadow:inset 1px 1px 0 #fff,1px 1px 0 #fff;"></div>
<div class="t" style="left:713px;top:490.5px;width:104px;text-align:center;">Copy</div>
<div style="left:713px;top:511px;width:104px;height:23px;background:#d4d0c8;border:1px solid #808080;box-shadow:inset 1px 1px 0 #fff,1px 1px 0 #fff;"></div>
<div class="t" style="left:713px;top:516.5px;width:104px;text-align:center;">Remove</div>
<div style="left:713px;top:537px;width:104px;height:23px;background:#d4d0c8;border:1px solid #808080;box-shadow:inset 1px 1px 0 #fff,1px 1px 0 #fff;"></div>
<div class="t" style="left:713px;top:542.5px;width:104px;text-align:center;">Reset Counters</div>
<div style="left:713px;top:563px;width:104px;height:23px;background:#d4d0c8;border:1px solid #808080;box-shadow:inset 1px 1px 0 #fff,1px 1px 0 #fff;"></div>
<div class="t" style="left:713px;top:568.5px;width:104px;text-align:center;">Reset All Counters</div>
<div style="left:153px;top:992px;width:671px;height:21px;background:#d4d0c8;border:1px solid #808080;box-shadow:1px 1px 0 #fff;box-shadow:none;border-color:#808080 #fff #fff #808080;"></div>
<div class="t" style="left:156px;top:995.5px;">enabled</div>
<div class="t" style="left:121px;top:382.2px;width:150px;text-align:right;letter-spacing:-0.05px;">Chain:</div>
<div style="left:275px;top:379px;width:402px;height:17px;background:#fff;border:1px solid #808080;box-shadow:1px 1px 0 #fff;"></div>
<div class="t" style="left:278px;top:381.5px;">forward</div>
<div style="left:678px;top:379px;width:16px;height:17px;background:#d4d0c8;border:1px solid #808080;box-shadow:inset 1px 1px 0 #fff,1px 1px 0 #fff;"></div>
<svg style="left:680px;top:381px" width="12" height="14" viewBox="0 0 12 14"><rect x="2.5" y="2.6" width="7" height="1.1" fill="#000"/><path d="M4.8 5 H7.2 V7 H9.6 L6 10.6 L2.4 7 H4.8 Z" fill="#000"/></svg>
<div class="t" style="left:121px;top:405.2px;width:150px;text-align:right;letter-spacing:-0.05px;">Src. Address:</div>
<div style="left:275px;top:402px;width:402px;height:17px;background:#d4d0c8;border:1px solid #808080;box-shadow:1px 1px 0 #fff;"></div>
<svg style="left:681px;top:408px" width="11" height="6" viewBox="0 0 11 6"><path d="M0.5 0.5 H10.5 L5.5 5.5 Z" fill="#000"/></svg>
<div class="t" style="left:121px;top:428.2px;width:150px;text-align:right;letter-spacing:-0.05px;">Dst. Address:</div>
<div style="left:275px;top:425px;width:402px;height:17px;background:#d4d0c8;border:1px solid #808080;box-shadow:1px 1px 0 #fff;"></div>
<svg style="left:681px;top:431px" width="11" height="6" viewBox="0 0 11 6"><path d="M0.5 0.5 H10.5 L5.5 5.5 Z" fill="#000"/></svg>
<div style="left:160px;top:448px;width:536px;height:1px;background:#eeebe5;"></div>
<div style="left:160px;top:449px;width:536px;height:1px;background:#a6a19a;"></div>
<div class="t" style="left:121px;top:459.2px;width:150px;text-align:right;letter-spacing:-0.05px;">Protocol:</div>
<div style="left:275px;top:456px;width:402px;height:17px;background:#d4d0c8;border:1px solid #808080;box-shadow:1px 1px 0 #fff;"></div>
<svg style="left:681px;top:462px" width="11" height="6" viewBox="0 0 11 6"><path d="M0.5 0.5 H10.5 L5.5 5.5 Z" fill="#000"/></svg>
<div class="t" style="left:121px;top:482.2px;width:150px;text-align:right;letter-spacing:-0.05px;color:#8e8a84;text-shadow:1px 1px 0 #fff;">Src. Port:</div>
<div style="left:275px;top:479px;width:402px;height:17px;background:#d4d0c8;border:1px solid #808080;box-shadow:1px 1px 0 #fff;"></div>
<svg style="left:681px;top:485px" width="11" height="6" viewBox="0 0 11 6"><path d="M0.5 0.5 H10.5 L5.5 5.5 Z" fill="#000"/></svg>
<div class="t" style="left:121px;top:505.2px;width:150px;text-align:right;letter-spacing:-0.05px;color:#8e8a84;text-shadow:1px 1px 0 #fff;">Dst. Port:</div>
<div style="left:275px;top:502px;width:402px;height:17px;background:#d4d0c8;border:1px solid #808080;box-shadow:1px 1px 0 #fff;"></div>
<svg style="left:681px;top:508px" width="11" height="6" viewBox="0 0 11 6"><path d="M0.5 0.5 H10.5 L5.5 5.5 Z" fill="#000"/></svg>
<div class="t" style="left:121px;top:528.2px;width:150px;text-align:right;letter-spacing:-0.05px;color:#8e8a84;text-shadow:1px 1px 0 #fff;">Any. Port:</div>
<div style="left:275px;top:525px;width:402px;height:17px;background:#d4d0c8;border:1px solid #808080;box-shadow:1px 1px 0 #fff;"></div>
<svg style="left:681px;top:531px" width="11" height="6" viewBox="0 0 11 6"><path d="M0.5 0.5 H10.5 L5.5 5.5 Z" fill="#000"/></svg>
<div class="t" style="left:121px;top:551.2px;width:150px;text-align:right;letter-spacing:-0.05px;">In. Interface:</div>
<div style="left:275px;top:548px;width:402px;height:17px;background:#d4d0c8;border:1px solid #808080;box-shadow:1px 1px 0 #fff;"></div>
<svg style="left:681px;top:554px" width="11" height="6" viewBox="0 0 11 6"><path d="M0.5 0.5 H10.5 L5.5 5.5 Z" fill="#000"/></svg>
<div class="t" style="left:121px;top:574.2px;width:150px;text-align:right;letter-spacing:-0.05px;">Out. Interface:</div>
<div style="left:275px;top:571px;width:402px;height:17px;background:#d4d0c8;border:1px solid #808080;box-shadow:1px 1px 0 #fff;"></div>
<svg style="left:681px;top:577px" width="11" height="6" viewBox="0 0 11 6"><path d="M0.5 0.5 H10.5 L5.5 5.5 Z" fill="#000"/></svg>
<div style="left:160px;top:594px;width:536px;height:1px;background:#eeebe5;"></div>
<div style="left:160px;top:595px;width:536px;height:1px;background:#a6a19a;"></div>
<div class="t" style="left:121px;top:605.2px;width:150px;text-align:right;letter-spacing:-0.05px;">In. Interface List:</div>
<div style="left:275px;top:602px;width:402px;height:17px;background:#d4d0c8;border:1px solid #808080;box-shadow:1px 1px 0 #fff;"></div>
<svg style="left:681px;top:608px" width="11" height="6" viewBox="0 0 11 6"><path d="M0.5 0.5 H10.5 L5.5 5.5 Z" fill="#000"/></svg>
<div class="t" style="left:121px;top:628.2px;width:150px;text-align:right;letter-spacing:-0.05px;">Out. Interface List:</div>
<div style="left:275px;top:625px;width:402px;height:17px;background:#d4d0c8;border:1px solid #808080;box-shadow:1px 1px 0 #fff;"></div>
<svg style="left:681px;top:631px" width="11" height="6" viewBox="0 0 11 6"><path d="M0.5 0.5 H10.5 L5.5 5.5 Z" fill="#000"/></svg>
<div style="left:160px;top:648px;width:536px;height:1px;background:#eeebe5;"></div>
<div style="left:160px;top:649px;width:536px;height:1px;background:#a6a19a;"></div>
<div class="t" style="left:121px;top:659.2px;width:150px;text-align:right;letter-spacing:-0.05px;">Packet Mark:</div>
<div style="left:275px;top:656px;width:402px;height:17px;background:#d4d0c8;border:1px solid #808080;box-shadow:1px 1px 0 #fff;"></div>
<svg style="left:681px;top:662px" width="11" height="6" viewBox="0 0 11 6"><path d="M0.5 0.5 H10.5 L5.5 5.5 Z" fill="#000"/></svg>
<div class="t" style="left:121px;top:682.2px;width:150px;text-align:right;letter-spacing:-0.05px;">Connection Mark:</div>
<div style="left:275px;top:679px;width:402px;height:17px;background:#d4d0c8;border:1px solid #808080;box-shadow:1px 1px 0 #fff;"></div>
<svg style="left:681px;top:685px" width="11" height="6" viewBox="0 0 11 6"><path d="M0.5 0.5 H10.5 L5.5 5.5 Z" fill="#000"/></svg>
<div class="t" style="left:121px;top:705.2px;width:150px;text-align:right;letter-spacing:-0.05px;">Routing Mark:</div>
<div style="left:275px;top:702px;width:402px;height:17px;background:#d4d0c8;border:1px solid #808080;box-shadow:1px 1px 0 #fff;"></div>
<svg style="left:681px;top:708px" width="11" height="6" viewBox="0 0 11 6"><path d="M0.5 0.5 H10.5 L5.5 5.5 Z" fill="#000"/></svg>
<div class="t" style="left:121px;top:728.2px;width:150px;text-align:right;letter-spacing:-0.05px;">Routing Table:</div>
<div style="left:275px;top:725px;width:402px;height:17px;background:#d4d0c8;border:1px solid #808080;box-shadow:1px 1px 0 #fff;"></div>
<svg style="left:681px;top:731px" width="11" height="6" viewBox="0 0 11 6"><path d="M0.5 0.5 H10.5 L5.5 5.5 Z" fill="#000"/></svg>
<div style="left:160px;top:748px;width:536px;height:1px;background:#eeebe5;"></div>
<div style="left:160px;top:749px;width:536px;height:1px;background:#a6a19a;"></div>
<div class="t" style="left:121px;top:759.2px;width:150px;text-align:right;letter-spacing:-0.05px;">Connection Type:</div>
<div style="left:275px;top:756px;width:402px;height:17px;background:#d4d0c8;border:1px solid #808080;box-shadow:1px 1px 0 #fff;"></div>
<svg style="left:681px;top:762px" width="11" height="6" viewBox="0 0 11 6"><path d="M0.5 0.5 H10.5 L5.5 5.5 Z" fill="#000"/></svg>
<div class="t" style="left:121px;top:782.2px;width:150px;text-align:right;letter-spacing:-0.05px;">Connection State:</div>
<div style="left:275px;top:782px;width:13px;height:13px;background:#fff;border:1px solid;border-color:#808080 #fff #fff #808080;box-shadow:inset 1px 1px 0 #404040,inset -1px -1px 0 #d4d0c8;"></div>
<div style="left:294px;top:782px;width:13px;height:13px;background:#fff;border:1px solid;border-color:#808080 #fff #fff #808080;box-shadow:inset 1px 1px 0 #404040,inset -1px -1px 0 #d4d0c8;"></div>
<div class="t" style="left:309px;top:781.4px;">invalid</div>
<div style="left:372px;top:782px;width:13px;height:13px;background:#fff;border:1px solid;border-color:#808080 #fff #fff #808080;box-shadow:inset 1px 1px 0 #404040,inset -1px -1px 0 #d4d0c8;"></div>
<svg style="left:372px;top:782px" width="13" height="13" viewBox="0 0 13 13"><path d="M3 6 L5.2 8.5 L10 3.5" stroke="#000" stroke-width="1.8" fill="none"/></svg>
<div class="t" style="left:387px;top:781.4px;">established</div>
<div style="left:450px;top:782px;width:13px;height:13px;background:#fff;border:1px solid;border-color:#808080 #fff #fff #808080;box-shadow:inset 1px 1px 0 #404040,inset -1px -1px 0 #d4d0c8;"></div>
<svg style="left:450px;top:782px" width="13" height="13" viewBox="0 0 13 13"><path d="M3 6 L5.2 8.5 L10 3.5" stroke="#000" stroke-width="1.8" fill="none"/></svg>
<div class="t" style="left:465px;top:781.4px;">related</div>
<div class="t" style="left:121px;top:805.2px;width:150px;text-align:right;letter-spacing:-0.05px;">Connection NAT State:</div>
<div style="left:275px;top:802px;width:402px;height:17px;background:#d4d0c8;border:1px solid #808080;box-shadow:1px 1px 0 #fff;"></div>
<svg style="left:681px;top:808px" width="11" height="6" viewBox="0 0 11 6"><path d="M0.5 0.5 H10.5 L5.5 5.5 Z" fill="#000"/></svg>
<div style="left:509px;top:376px;width:677px;height:695px;background:#d4d0c8;border:1px solid #000;"></div>
<div style="left:510px;top:377px;width:675px;height:1px;background:#dedad2;"></div>
<div style="left:510px;top:377px;width:1px;height:693px;background:#dedad2;"></div>
<div style="left:1184px;top:377px;width:1px;height:693px;background:#dedad2;"></div>
<div style="left:511px;top:378px;width:673px;height:21px;background:#aaa69e;"></div>
<div class="t" style="left:515px;top:384px;color:#fafafa;">Firewall Rule &lt;&gt;</div>
<div style="left:1149px;top:381px;width:15px;height:15px;background:#d4d0c8;border:1px solid #2a2a34;box-shadow:inset 0 0 0 1px #fff;"></div>
<svg style="left:1149px;top:381px" width="15" height="15" viewBox="0 0 15 15"><rect x="3.5" y="4" width="8" height="7.5" fill="none" stroke="#111" stroke-width="1"/><path d="M3 4 H12" stroke="#111" stroke-width="2"/></svg>
<div style="left:1166px;top:381px;width:15px;height:15px;background:#d4d0c8;border:1px solid #2a2a34;box-shadow:inset 0 0 0 1px #fff;"></div>
<svg style="left:1166px;top:381px" width="15" height="15" viewBox="0 0 15 15"><path d="M4.5 4.5 L10.5 10.5 M10.5 4.5 L4.5 10.5" stroke="#111" stroke-width="2"/></svg>
<div style="left:512px;top:426px;width:550px;height:619px;background:#d4d0c8;border-left:1px solid #fff;border-right:1px solid #808080;border-bottom:1px solid #808080;"></div>
<div style="left:512px;top:426px;width:3px;height:1px;background:#fff;"></div>
<div style="left:565px;top:426px;width:496px;height:1px;background:#fff;"></div>
<div style="left:567px;top:404px;width:62px;height:22px;background:#c6c2ba;border-left:1px solid #f0eee8;border-top:1px solid #dcd8d0;border-right:1px solid #a8a49c;"></div>
<div class="t" style="left:567px;top:409.5px;width:62px;text-align:center;">Advanced</div>
<div style="left:629px;top:404px;width:38px;height:22px;background:#c6c2ba;border-left:1px solid #f0eee8;border-top:1px solid #dcd8d0;border-right:1px solid #a8a49c;"></div>
<div class="t" style="left:629px;top:409.5px;width:38px;text-align:center;">Extra</div>
<div style="left:668px;top:404px;width:43px;height:22px;background:#c6c2ba;border-left:1px solid #f0eee8;border-top:1px solid #dcd8d0;border-right:1px solid #a8a49c;"></div>
<div class="t" style="left:668px;top:409.5px;width:43px;text-align:center;">Action</div>
<div style="left:712px;top:404px;width:55px;height:22px;background:#c6c2ba;border-left:1px solid #f0eee8;border-top:1px solid #dcd8d0;border-right:1px solid #a8a49c;"></div>
<div class="t" style="left:712px;top:409.5px;width:55px;text-align:center;">Statistics</div>
<div style="left:514px;top:401px;width:52px;height:27px;background:#d4d0c8;border-left:1px solid #fff;border-top:1px solid #fff;border-right:1px solid #808080;"></div>
<div class="t" style="left:514px;top:407.5px;width:52px;text-align:center;">General</div>
<div style="left:1072px;top:405px;width:104px;height:23px;background:#d4d0c8;border:1px solid #000;box-shadow:inset 1px 1px 0 #fff,inset -1px -1px 0 #808080;"></div>
<div class="t" style="left:1072px;top:410.5px;width:104px;text-align:center;">OK</div>
<div style="left:1072px;top:431px;width:104px;height:23px;background:#d4d0c8;border:1px solid #808080;box-shadow:inset 1px 1px 0 #fff,1px 1px 0 #fff;"></div>
<div class="t" style="left:1072px;top:436.5px;width:104px;text-align:center;">Cancel</div>
<div style="left:1072px;top:457px;width:104px;height:23px;background:#d4d0c8;border:1px solid #808080;box-shadow:inset 1px 1px 0 #fff,1px 1px 0 #fff;"></div>
<div class="t" style="left:1072px;top:462.5px;width:104px;text-align:center;">Apply</div>
<div style="left:1072px;top:488px;width:104px;height:23px;background:#d4d0c8;border:1px solid #808080;box-shadow:inset 1px 1px 0 #fff,1px 1px 0 #fff;"></div>
<div class="t" style="left:1072px;top:493.5px;width:104px;text-align:center;">Disable</div>
<div style="left:1072px;top:514px;width:104px;height:23px;background:#d4d0c8;border:1px solid #808080;box-shadow:inset 1px 1px 0 #fff,1px 1px 0 #fff;"></div>
<div class="t" style="left:1072px;top:519.5px;width:104px;text-align:center;">Comment</div>
<div style="left:1072px;top:540px;width:104px;height:23px;background:#d4d0c8;border:1px solid #808080;box-shadow:inset 1px 1px 0 #fff,1px 1px 0 #fff;"></div>
<div class="t" style="left:1072px;top:545.5px;width:104px;text-align:center;">Copy</div>
<div style="left:1072px;top:566px;width:104px;height:23px;background:#d4d0c8;border:1px solid #808080;box-shadow:inset 1px 1px 0 #fff,1px 1px 0 #fff;"></div>
<div class="t" style="left:1072px;top:571.5px;width:104px;text-align:center;">Remove</div>
<div style="left:1072px;top:592px;width:104px;height:23px;background:#d4d0c8;border:1px solid #808080;box-shadow:inset 1px 1px 0 #fff,1px 1px 0 #fff;"></div>
<div class="t" style="left:1072px;top:597.5px;width:104px;text-align:center;">Reset Counters</div>
<div style="left:1072px;top:618px;width:104px;height:23px;background:#d4d0c8;border:1px solid #808080;box-shadow:inset 1px 1px 0 #fff,1px 1px 0 #fff;"></div>
<div class="t" style="left:1072px;top:623.5px;width:104px;text-align:center;">Reset All Counters</div>
<div style="left:512px;top:1047px;width:671px;height:21px;background:#d4d0c8;border:1px solid #808080;box-shadow:1px 1px 0 #fff;box-shadow:none;border-color:#808080 #fff #fff #808080;"></div>
<div class="t" style="left:515px;top:1050.5px;">enabled</div>
<div class="t" style="left:480px;top:437.2px;width:150px;text-align:right;letter-spacing:-0.05px;">Chain:</div>
<div style="left:634px;top:434px;width:402px;height:17px;background:#fff;border:1px solid #808080;box-shadow:1px 1px 0 #fff;"></div>
<div class="t" style="left:637px;top:436.5px;">forward</div>
<div style="left:1037px;top:434px;width:16px;height:17px;background:#d4d0c8;border:1px solid #808080;box-shadow:inset 1px 1px 0 #fff,1px 1px 0 #fff;"></div>
<svg style="left:1039px;top:436px" width="12" height="14" viewBox="0 0 12 14"><rect x="2.5" y="2.6" width="7" height="1.1" fill="#000"/><path d="M4.8 5 H7.2 V7 H9.6 L6 10.6 L2.4 7 H4.8 Z" fill="#000"/></svg>
<div class="t" style="left:480px;top:460.2px;width:150px;text-align:right;letter-spacing:-0.05px;">Src. Address:</div>
<div style="left:634px;top:457px;width:402px;height:17px;background:#d4d0c8;border:1px solid #808080;box-shadow:1px 1px 0 #fff;"></div>
<svg style="left:1040px;top:463px" width="11" height="6" viewBox="0 0 11 6"><path d="M0.5 0.5 H10.5 L5.5 5.5 Z" fill="#000"/></svg>
<div class="t" style="left:480px;top:483.2px;width:150px;text-align:right;letter-spacing:-0.05px;">Dst. Address:</div>
<div style="left:634px;top:480px;width:402px;height:17px;background:#d4d0c8;border:1px solid #808080;box-shadow:1px 1px 0 #fff;"></div>
<svg style="left:1040px;top:486px" width="11" height="6" viewBox="0 0 11 6"><path d="M0.5 0.5 H10.5 L5.5 5.5 Z" fill="#000"/></svg>
<div style="left:519px;top:503px;width:536px;height:1px;background:#eeebe5;"></div>
<div style="left:519px;top:504px;width:536px;height:1px;background:#a6a19a;"></div>
<div class="t" style="left:480px;top:514.2px;width:150px;text-align:right;letter-spacing:-0.05px;">Protocol:</div>
<div style="left:634px;top:511px;width:402px;height:17px;background:#d4d0c8;border:1px solid #808080;box-shadow:1px 1px 0 #fff;"></div>
<svg style="left:1040px;top:517px" width="11" height="6" viewBox="0 0 11 6"><path d="M0.5 0.5 H10.5 L5.5 5.5 Z" fill="#000"/></svg>
<div class="t" style="left:480px;top:537.2px;width:150px;text-align:right;letter-spacing:-0.05px;color:#8e8a84;text-shadow:1px 1px 0 #fff;">Src. Port:</div>
<div style="left:634px;top:534px;width:402px;height:17px;background:#d4d0c8;border:1px solid #808080;box-shadow:1px 1px 0 #fff;"></div>
<svg style="left:1040px;top:540px" width="11" height="6" viewBox="0 0 11 6"><path d="M0.5 0.5 H10.5 L5.5 5.5 Z" fill="#000"/></svg>
<div class="t" style="left:480px;top:560.2px;width:150px;text-align:right;letter-spacing:-0.05px;color:#8e8a84;text-shadow:1px 1px 0 #fff;">Dst. Port:</div>
<div style="left:634px;top:557px;width:402px;height:17px;background:#d4d0c8;border:1px solid #808080;box-shadow:1px 1px 0 #fff;"></div>
<svg style="left:1040px;top:563px" width="11" height="6" viewBox="0 0 11 6"><path d="M0.5 0.5 H10.5 L5.5 5.5 Z" fill="#000"/></svg>
<div class="t" style="left:480px;top:583.2px;width:150px;text-align:right;letter-spacing:-0.05px;color:#8e8a84;text-shadow:1px 1px 0 #fff;">Any. Port:</div>
<div style="left:634px;top:580px;width:402px;height:17px;background:#d4d0c8;border:1px solid #808080;box-shadow:1px 1px 0 #fff;"></div>
<svg style="left:1040px;top:586px" width="11" height="6" viewBox="0 0 11 6"><path d="M0.5 0.5 H10.5 L5.5 5.5 Z" fill="#000"/></svg>
<div class="t" style="left:480px;top:606.2px;width:150px;text-align:right;letter-spacing:-0.05px;">In. Interface:</div>
<div style="left:634px;top:606px;width:13px;height:13px;background:#fff;border:1px solid;border-color:#808080 #fff #fff #808080;box-shadow:inset 1px 1px 0 #404040,inset -1px -1px 0 #d4d0c8;"></div>
<div style="left:653px;top:603px;width:383px;height:17px;background:#fff;border:1px solid #808080;box-shadow:1px 1px 0 #fff;"></div>
<div class="t" style="left:656px;top:605.5px;">lan</div>
<div class="t" style="left:480px;top:629.2px;width:150px;text-align:right;letter-spacing:-0.05px;">Out. Interface:</div>
<div style="left:634px;top:626px;width:402px;height:17px;background:#d4d0c8;border:1px solid #808080;box-shadow:1px 1px 0 #fff;"></div>
<svg style="left:1040px;top:632px" width="11" height="6" viewBox="0 0 11 6"><path d="M0.5 0.5 H10.5 L5.5 5.5 Z" fill="#000"/></svg>
<div style="left:519px;top:649px;width:536px;height:1px;background:#eeebe5;"></div>
<div style="left:519px;top:650px;width:536px;height:1px;background:#a6a19a;"></div>
<div class="t" style="left:480px;top:660.2px;width:150px;text-align:right;letter-spacing:-0.05px;">In. Interface List:</div>
<div style="left:634px;top:657px;width:402px;height:17px;background:#d4d0c8;border:1px solid #808080;box-shadow:1px 1px 0 #fff;"></div>
<svg style="left:1040px;top:663px" width="11" height="6" viewBox="0 0 11 6"><path d="M0.5 0.5 H10.5 L5.5 5.5 Z" fill="#000"/></svg>
<div class="t" style="left:480px;top:683.2px;width:150px;text-align:right;letter-spacing:-0.05px;">Out. Interface List:</div>
<div style="left:634px;top:680px;width:402px;height:17px;background:#d4d0c8;border:1px solid #808080;box-shadow:1px 1px 0 #fff;"></div>
<svg style="left:1040px;top:686px" width="11" height="6" viewBox="0 0 11 6"><path d="M0.5 0.5 H10.5 L5.5 5.5 Z" fill="#000"/></svg>
<div style="left:519px;top:703px;width:536px;height:1px;background:#eeebe5;"></div>
<div style="left:519px;top:704px;width:536px;height:1px;background:#a6a19a;"></div>
<div class="t" style="left:480px;top:714.2px;width:150px;text-align:right;letter-spacing:-0.05px;">Packet Mark:</div>
<div style="left:634px;top:711px;width:402px;height:17px;background:#d4d0c8;border:1px solid #808080;box-shadow:1px 1px 0 #fff;"></div>
<svg style="left:1040px;top:717px" width="11" height="6" viewBox="0 0 11 6"><path d="M0.5 0.5 H10.5 L5.5 5.5 Z" fill="#000"/></svg>
<div class="t" style="left:480px;top:737.2px;width:150px;text-align:right;letter-spacing:-0.05px;">Connection Mark:</div>
<div style="left:634px;top:734px;width:402px;height:17px;background:#d4d0c8;border:1px solid #808080;box-shadow:1px 1px 0 #fff;"></div>
<svg style="left:1040px;top:740px" width="11" height="6" viewBox="0 0 11 6"><path d="M0.5 0.5 H10.5 L5.5 5.5 Z" fill="#000"/></svg>
<div class="t" style="left:480px;top:760.2px;width:150px;text-align:right;letter-spacing:-0.05px;">Routing Mark:</div>
<div style="left:634px;top:757px;width:402px;height:17px;background:#d4d0c8;border:1px solid #808080;box-shadow:1px 1px 0 #fff;"></div>
<svg style="left:1040px;top:763px" width="11" height="6" viewBox="0 0 11 6"><path d="M0.5 0.5 H10.5 L5.5 5.5 Z" fill="#000"/></svg>
<div class="t" style="left:480px;top:783.2px;width:150px;text-align:right;letter-spacing:-0.05px;">Routing Table:</div>
<div style="left:634px;top:780px;width:402px;height:17px;background:#d4d0c8;border:1px solid #808080;box-shadow:1px 1px 0 #fff;"></div>
<svg style="left:1040px;top:786px" width="11" height="6" viewBox="0 0 11 6"><path d="M0.5 0.5 H10.5 L5.5 5.5 Z" fill="#000"/></svg>
<div style="left:519px;top:803px;width:536px;height:1px;background:#eeebe5;"></div>
<div style="left:519px;top:804px;width:536px;height:1px;background:#a6a19a;"></div>
<div class="t" style="left:480px;top:814.2px;width:150px;text-align:right;letter-spacing:-0.05px;">Connection Type:</div>
<div style="left:634px;top:811px;width:402px;height:17px;background:#d4d0c8;border:1px solid #808080;box-shadow:1px 1px 0 #fff;"></div>
<svg style="left:1040px;top:817px" width="11" height="6" viewBox="0 0 11 6"><path d="M0.5 0.5 H10.5 L5.5 5.5 Z" fill="#000"/></svg>
<div class="t" style="left:480px;top:837.2px;width:150px;text-align:right;letter-spacing:-0.05px;">Connection State:</div>
<div style="left:634px;top:834px;width:402px;height:17px;background:#d4d0c8;border:1px solid #808080;box-shadow:1px 1px 0 #fff;"></div>
<svg style="left:1040px;top:840px" width="11" height="6" viewBox="0 0 11 6"><path d="M0.5 0.5 H10.5 L5.5 5.5 Z" fill="#000"/></svg>
<div class="t" style="left:480px;top:860.2px;width:150px;text-align:right;letter-spacing:-0.05px;">Connection NAT State:</div>
<div style="left:634px;top:857px;width:402px;height:17px;background:#d4d0c8;border:1px solid #808080;box-shadow:1px 1px 0 #fff;"></div>
<svg style="left:1040px;top:863px" width="11" height="6" viewBox="0 0 11 6"><path d="M0.5 0.5 H10.5 L5.5 5.5 Z" fill="#000"/></svg>
<div style="left:767px;top:424px;width:677px;height:695px;background:#d4d0c8;border:1px solid #000;"></div>
<div style="left:768px;top:425px;width:675px;height:1px;background:#dedad2;"></div>
<div style="left:768px;top:425px;width:1px;height:693px;background:#dedad2;"></div>
<div style="left:1442px;top:425px;width:1px;height:693px;background:#dedad2;"></div>
<div style="left:769px;top:426px;width:673px;height:21px;background:#aaa69e;"></div>
<div class="t" style="left:773px;top:432px;color:#fafafa;">Firewall Rule &lt;&gt;</div>
<div style="left:1407px;top:429px;width:15px;height:15px;background:#d4d0c8;border:1px solid #2a2a34;box-shadow:inset 0 0 0 1px #fff;"></div>
<svg style="left:1407px;top:429px" width="15" height="15" viewBox="0 0 15 15"><rect x="3.5" y="4" width="8" height="7.5" fill="none" stroke="#111" stroke-width="1"/><path d="M3 4 H12" stroke="#111" stroke-width="2"/></svg>
<div style="left:1424px;top:429px;width:15px;height:15px;background:#d4d0c8;border:1px solid #2a2a34;box-shadow:inset 0 0 0 1px #fff;"></div>
<svg style="left:1424px;top:429px" width="15" height="15" viewBox="0 0 15 15"><path d="M4.5 4.5 L10.5 10.5 M10.5 4.5 L4.5 10.5" stroke="#111" stroke-width="2"/></svg>
<div style="left:770px;top:474px;width:550px;height:619px;background:#d4d0c8;border-left:1px solid #fff;border-right:1px solid #808080;border-bottom:1px solid #808080;"></div>
<div style="left:770px;top:474px;width:3px;height:1px;background:#fff;"></div>
<div style="left:823px;top:474px;width:496px;height:1px;background:#fff;"></div>
<div style="left:825px;top:452px;width:62px;height:22px;background:#c6c2ba;border-left:1px solid #f0eee8;border-top:1px solid #dcd8d0;border-right:1px solid #a8a49c;"></div>
<div class="t" style="left:825px;top:457.5px;width:62px;text-align:center;">Advanced</div>
<div style="left:887px;top:452px;width:38px;height:22px;background:#c6c2ba;border-left:1px solid #f0eee8;border-top:1px solid #dcd8d0;border-right:1px solid #a8a49c;"></div>
<div class="t" style="left:887px;top:457.5px;width:38px;text-align:center;">Extra</div>
<div style="left:926px;top:452px;width:43px;height:22px;background:#c6c2ba;border-left:1px solid #f0eee8;border-top:1px solid #dcd8d0;border-right:1px solid #a8a49c;"></div>
<div class="t" style="left:926px;top:457.5px;width:43px;text-align:center;">Action</div>
<div style="left:970px;top:452px;width:55px;height:22px;background:#c6c2ba;border-left:1px solid #f0eee8;border-top:1px solid #dcd8d0;border-right:1px solid #a8a49c;"></div>
<div class="t" style="left:970px;top:457.5px;width:55px;text-align:center;">Statistics</div>
<div style="left:772px;top:449px;width:52px;height:27px;background:#d4d0c8;border-left:1px solid #fff;border-top:1px solid #fff;border-right:1px solid #808080;"></div>
<div class="t" style="left:772px;top:455.5px;width:52px;text-align:center;">General</div>
<div style="left:1330px;top:453px;width:104px;height:23px;background:#d4d0c8;border:1px solid #000;box-shadow:inset 1px 1px 0 #fff,inset -1px -1px 0 #808080;"></div>
<div class="t" style="left:1330px;top:458.5px;width:104px;text-align:center;">OK</div>
<div style="left:1330px;top:479px;width:104px;height:23px;background:#d4d0c8;border:1px solid #808080;box-shadow:inset 1px 1px 0 #fff,1px 1px 0 #fff;"></div>
<div class="t" style="left:1330px;top:484.5px;width:104px;text-align:center;">Cancel</div>
<div style="left:1330px;top:505px;width:104px;height:23px;background:#d4d0c8;border:1px solid #808080;box-shadow:inset 1px 1px 0 #fff,1px 1px 0 #fff;"></div>
<div class="t" style="left:1330px;top:510.5px;width:104px;text-align:center;">Apply</div>
<div style="left:1330px;top:536px;width:104px;height:23px;background:#d4d0c8;border:1px solid #808080;box-shadow:inset 1px 1px 0 #fff,1px 1px 0 #fff;"></div>
<div class="t" style="left:1330px;top:541.5px;width:104px;text-align:center;">Disable</div>
<div style="left:1330px;top:562px;width:104px;height:23px;background:#d4d0c8;border:1px solid #808080;box-shadow:inset 1px 1px 0 #fff,1px 1px 0 #fff;"></div>
<div class="t" style="left:1330px;top:567.5px;width:104px;text-align:center;">Comment</div>
<div style="left:1330px;top:588px;width:104px;height:23px;background:#d4d0c8;border:1px solid #808080;box-shadow:inset 1px 1px 0 #fff,1px 1px 0 #fff;"></div>
<div class="t" style="left:1330px;top:593.5px;width:104px;text-align:center;">Copy</div>
<div style="left:1330px;top:614px;width:104px;height:23px;background:#d4d0c8;border:1px solid #808080;box-shadow:inset 1px 1px 0 #fff,1px 1px 0 #fff;"></div>
<div class="t" style="left:1330px;top:619.5px;width:104px;text-align:center;">Remove</div>
<div style="left:1330px;top:640px;width:104px;height:23px;background:#d4d0c8;border:1px solid #808080;box-shadow:inset 1px 1px 0 #fff,1px 1px 0 #fff;"></div>
<div class="t" style="left:1330px;top:645.5px;width:104px;text-align:center;">Reset Counters</div>
<div style="left:1330px;top:666px;width:104px;height:23px;background:#d4d0c8;border:1px solid #808080;box-shadow:inset 1px 1px 0 #fff,1px 1px 0 #fff;"></div>
<div class="t" style="left:1330px;top:671.5px;width:104px;text-align:center;">Reset All Counters</div>
<div style="left:770px;top:1095px;width:671px;height:21px;background:#d4d0c8;border:1px solid #808080;box-shadow:1px 1px 0 #fff;box-shadow:none;border-color:#808080 #fff #fff #808080;"></div>
<div class="t" style="left:773px;top:1098.5px;">enabled</div>
<div class="t" style="left:738px;top:485.2px;width:150px;text-align:right;letter-spacing:-0.05px;">Chain:</div>
<div style="left:892px;top:482px;width:402px;height:17px;background:#fff;border:1px solid #808080;box-shadow:1px 1px 0 #fff;"></div>
<div class="t" style="left:895px;top:484.5px;">forward</div>
<div style="left:1295px;top:482px;width:16px;height:17px;background:#d4d0c8;border:1px solid #808080;box-shadow:inset 1px 1px 0 #fff,1px 1px 0 #fff;"></div>
<svg style="left:1297px;top:484px" width="12" height="14" viewBox="0 0 12 14"><rect x="2.5" y="2.6" width="7" height="1.1" fill="#000"/><path d="M4.8 5 H7.2 V7 H9.6 L6 10.6 L2.4 7 H4.8 Z" fill="#000"/></svg>
<div class="t" style="left:738px;top:508.2px;width:150px;text-align:right;letter-spacing:-0.05px;">Src. Address:</div>
<div style="left:892px;top:505px;width:402px;height:17px;background:#d4d0c8;border:1px solid #808080;box-shadow:1px 1px 0 #fff;"></div>
<svg style="left:1298px;top:511px" width="11" height="6" viewBox="0 0 11 6"><path d="M0.5 0.5 H10.5 L5.5 5.5 Z" fill="#000"/></svg>
<div class="t" style="left:738px;top:531.2px;width:150px;text-align:right;letter-spacing:-0.05px;">Dst. Address:</div>
<div style="left:892px;top:528px;width:402px;height:17px;background:#d4d0c8;border:1px solid #808080;box-shadow:1px 1px 0 #fff;"></div>
<svg style="left:1298px;top:534px" width="11" height="6" viewBox="0 0 11 6"><path d="M0.5 0.5 H10.5 L5.5 5.5 Z" fill="#000"/></svg>
<div style="left:777px;top:551px;width:536px;height:1px;background:#eeebe5;"></div>
<div style="left:777px;top:552px;width:536px;height:1px;background:#a6a19a;"></div>
<div class="t" style="left:738px;top:562.2px;width:150px;text-align:right;letter-spacing:-0.05px;">Protocol:</div>
<div style="left:892px;top:559px;width:402px;height:17px;background:#d4d0c8;border:1px solid #808080;box-shadow:1px 1px 0 #fff;"></div>
<svg style="left:1298px;top:565px" width="11" height="6" viewBox="0 0 11 6"><path d="M0.5 0.5 H10.5 L5.5 5.5 Z" fill="#000"/></svg>
<div class="t" style="left:738px;top:585.2px;width:150px;text-align:right;letter-spacing:-0.05px;color:#8e8a84;text-shadow:1px 1px 0 #fff;">Src. Port:</div>
<div style="left:892px;top:582px;width:402px;height:17px;background:#d4d0c8;border:1px solid #808080;box-shadow:1px 1px 0 #fff;"></div>
<svg style="left:1298px;top:588px" width="11" height="6" viewBox="0 0 11 6"><path d="M0.5 0.5 H10.5 L5.5 5.5 Z" fill="#000"/></svg>
<div class="t" style="left:738px;top:608.2px;width:150px;text-align:right;letter-spacing:-0.05px;color:#8e8a84;text-shadow:1px 1px 0 #fff;">Dst. Port:</div>
<div style="left:892px;top:605px;width:402px;height:17px;background:#d4d0c8;border:1px solid #808080;box-shadow:1px 1px 0 #fff;"></div>
<svg style="left:1298px;top:611px" width="11" height="6" viewBox="0 0 11 6"><path d="M0.5 0.5 H10.5 L5.5 5.5 Z" fill="#000"/></svg>
<div class="t" style="left:738px;top:631.2px;width:150px;text-align:right;letter-spacing:-0.05px;color:#8e8a84;text-shadow:1px 1px 0 #fff;">Any. Port:</div>
<div style="left:892px;top:628px;width:402px;height:17px;background:#d4d0c8;border:1px solid #808080;box-shadow:1px 1px 0 #fff;"></div>
<svg style="left:1298px;top:634px" width="11" height="6" viewBox="0 0 11 6"><path d="M0.5 0.5 H10.5 L5.5 5.5 Z" fill="#000"/></svg>
<div class="t" style="left:738px;top:654.2px;width:150px;text-align:right;letter-spacing:-0.05px;">In. Interface:</div>
<div style="left:892px;top:651px;width:402px;height:17px;background:#d4d0c8;border:1px solid #808080;box-shadow:1px 1px 0 #fff;"></div>
<svg style="left:1298px;top:657px" width="11" height="6" viewBox="0 0 11 6"><path d="M0.5 0.5 H10.5 L5.5 5.5 Z" fill="#000"/></svg>
<div class="t" style="left:738px;top:677.2px;width:150px;text-align:right;letter-spacing:-0.05px;">Out. Interface:</div>
<div style="left:892px;top:674px;width:402px;height:17px;background:#d4d0c8;border:1px solid #808080;box-shadow:1px 1px 0 #fff;"></div>
<svg style="left:1298px;top:680px" width="11" height="6" viewBox="0 0 11 6"><path d="M0.5 0.5 H10.5 L5.5 5.5 Z" fill="#000"/></svg>
<div style="left:777px;top:697px;width:536px;height:1px;background:#eeebe5;"></div>
<div style="left:777px;top:698px;width:536px;height:1px;background:#a6a19a;"></div>
<div class="t" style="left:738px;top:708.2px;width:150px;text-align:right;letter-spacing:-0.05px;">In. Interface List:</div>
<div style="left:892px;top:705px;width:402px;height:17px;background:#d4d0c8;border:1px solid #808080;box-shadow:1px 1px 0 #fff;"></div>
<svg style="left:1298px;top:711px" width="11" height="6" viewBox="0 0 11 6"><path d="M0.5 0.5 H10.5 L5.5 5.5 Z" fill="#000"/></svg>
<div class="t" style="left:738px;top:731.2px;width:150px;text-align:right;letter-spacing:-0.05px;">Out. Interface List:</div>
<div style="left:892px;top:728px;width:402px;height:17px;background:#d4d0c8;border:1px solid #808080;box-shadow:1px 1px 0 #fff;"></div>
<svg style="left:1298px;top:734px" width="11" height="6" viewBox="0 0 11 6"><path d="M0.5 0.5 H10.5 L5.5 5.5 Z" fill="#000"/></svg>
<div style="left:777px;top:751px;width:536px;height:1px;background:#eeebe5;"></div>
<div style="left:777px;top:752px;width:536px;height:1px;background:#a6a19a;"></div>
<div class="t" style="left:738px;top:762.2px;width:150px;text-align:right;letter-spacing:-0.05px;">Packet Mark:</div>
<div style="left:892px;top:759px;width:402px;height:17px;background:#d4d0c8;border:1px solid #808080;box-shadow:1px 1px 0 #fff;"></div>
<svg style="left:1298px;top:765px" width="11" height="6" viewBox="0 0 11 6"><path d="M0.5 0.5 H10.5 L5.5 5.5 Z" fill="#000"/></svg>
<div class="t" style="left:738px;top:785.2px;width:150px;text-align:right;letter-spacing:-0.05px;">Connection Mark:</div>
<div style="left:892px;top:782px;width:402px;height:17px;background:#d4d0c8;border:1px solid #808080;box-shadow:1px 1px 0 #fff;"></div>
<svg style="left:1298px;top:788px" width="11" height="6" viewBox="0 0 11 6"><path d="M0.5 0.5 H10.5 L5.5 5.5 Z" fill="#000"/></svg>
<div class="t" style="left:738px;top:808.2px;width:150px;text-align:right;letter-spacing:-0.05px;">Routing Mark:</div>
<div style="left:892px;top:805px;width:402px;height:17px;background:#d4d0c8;border:1px solid #808080;box-shadow:1px 1px 0 #fff;"></div>
<svg style="left:1298px;top:811px" width="11" height="6" viewBox="0 0 11 6"><path d="M0.5 0.5 H10.5 L5.5 5.5 Z" fill="#000"/></svg>
<div class="t" style="left:738px;top:831.2px;width:150px;text-align:right;letter-spacing:-0.05px;">Routing Table:</div>
<div style="left:892px;top:828px;width:402px;height:17px;background:#d4d0c8;border:1px solid #808080;box-shadow:1px 1px 0 #fff;"></div>
<svg style="left:1298px;top:834px" width="11" height="6" viewBox="0 0 11 6"><path d="M0.5 0.5 H10.5 L5.5 5.5 Z" fill="#000"/></svg>
<div style="left:777px;top:851px;width:536px;height:1px;background:#eeebe5;"></div>
<div style="left:777px;top:852px;width:536px;height:1px;background:#a6a19a;"></div>
<div class="t" style="left:738px;top:862.2px;width:150px;text-align:right;letter-spacing:-0.05px;">Connection Type:</div>
<div style="left:892px;top:859px;width:402px;height:17px;background:#d4d0c8;border:1px solid #808080;box-shadow:1px 1px 0 #fff;"></div>
<svg style="left:1298px;top:865px" width="11" height="6" viewBox="0 0 11 6"><path d="M0.5 0.5 H10.5 L5.5 5.5 Z" fill="#000"/></svg>
<div class="t" style="left:738px;top:885.2px;width:150px;text-align:right;letter-spacing:-0.05px;">Connection State:</div>
<div style="left:892px;top:885px;width:13px;height:13px;background:#fff;border:1px solid;border-color:#808080 #fff #fff #808080;box-shadow:inset 1px 1px 0 #404040,inset -1px -1px 0 #d4d0c8;"></div>
<div style="left:911px;top:885px;width:13px;height:13px;background:#fff;border:1px solid;border-color:#808080 #fff #fff #808080;box-shadow:inset 1px 1px 0 #404040,inset -1px -1px 0 #d4d0c8;"></div>
<svg style="left:911px;top:885px" width="13" height="13" viewBox="0 0 13 13"><path d="M3 6 L5.2 8.5 L10 3.5" stroke="#000" stroke-width="1.8" fill="none"/></svg>
<div class="t" style="left:926px;top:884.4px;">invalid</div>
<div style="left:989px;top:885px;width:13px;height:13px;background:#fff;border:1px solid;border-color:#808080 #fff #fff #808080;box-shadow:inset 1px 1px 0 #404040,inset -1px -1px 0 #d4d0c8;"></div>
<div class="t" style="left:1004px;top:884.4px;">established</div>
<div style="left:1067px;top:885px;width:13px;height:13px;background:#fff;border:1px solid;border-color:#808080 #fff #fff #808080;box-shadow:inset 1px 1px 0 #404040,inset -1px -1px 0 #d4d0c8;"></div>
<div class="t" style="left:1082px;top:884.4px;">related</div>
<div class="t" style="left:738px;top:908.2px;width:150px;text-align:right;letter-spacing:-0.05px;">Connection NAT State:</div>
<div style="left:892px;top:905px;width:402px;height:17px;background:#d4d0c8;border:1px solid #808080;box-shadow:1px 1px 0 #fff;"></div>
<svg style="left:1298px;top:911px" width="11" height="6" viewBox="0 0 11 6"><path d="M0.5 0.5 H10.5 L5.5 5.5 Z" fill="#000"/></svg>
<div style="left:1027px;top:514px;width:677px;height:695px;background:#d4d0c8;border:1px solid #000;"></div>
<div style="left:1028px;top:515px;width:675px;height:1px;background:#b4b4e4;"></div>
<div style="left:1028px;top:515px;width:1px;height:693px;background:#b4b4e4;"></div>
<div style="left:1702px;top:515px;width:1px;height:693px;background:#b4b4e4;"></div>
<div style="left:1029px;top:537px;width:673px;height:1px;background:#d4d2ec;"></div>
<div style="left:1029px;top:516px;width:673px;height:21px;background:linear-gradient(90deg,#4a4ac6,#4f4fcb);"></div>
<div class="t" style="left:1033px;top:522px;color:#fafafa;">Firewall Rule &lt;&gt;</div>
<div style="left:1667px;top:519px;width:15px;height:15px;background:#d4d0c8;border:1px solid #2a2a34;box-shadow:inset 0 0 0 1px #fff;"></div>
<svg style="left:1667px;top:519px" width="15" height="15" viewBox="0 0 15 15"><rect x="3.5" y="4" width="8" height="7.5" fill="none" stroke="#111" stroke-width="1"/><path d="M3 4 H12" stroke="#111" stroke-width="2"/></svg>
<div style="left:1684px;top:519px;width:15px;height:15px;background:#d4d0c8;border:1px solid #2a2a34;box-shadow:inset 0 0 0 1px #fff;"></div>
<svg style="left:1684px;top:519px" width="15" height="15" viewBox="0 0 15 15"><path d="M4.5 4.5 L10.5 10.5 M10.5 4.5 L4.5 10.5" stroke="#111" stroke-width="2"/></svg>
<div style="left:1030px;top:564px;width:550px;height:619px;background:#d4d0c8;border-left:1px solid #fff;border-right:1px solid #808080;border-bottom:1px solid #808080;"></div>
<div style="left:1030px;top:564px;width:157px;height:1px;background:#fff;"></div>
<div style="left:1228px;top:564px;width:351px;height:1px;background:#fff;"></div>
<div style="left:1032px;top:542px;width:52px;height:22px;background:#c6c2ba;border-left:1px solid #f0eee8;border-top:1px solid #dcd8d0;border-right:1px solid #a8a49c;"></div>
<div class="t" style="left:1032px;top:547.5px;width:52px;text-align:center;">General</div>
<div style="left:1085px;top:542px;width:62px;height:22px;background:#c6c2ba;border-left:1px solid #f0eee8;border-top:1px solid #dcd8d0;border-right:1px solid #a8a49c;"></div>
<div class="t" style="left:1085px;top:547.5px;width:62px;text-align:center;">Advanced</div>
<div style="left:1147px;top:542px;width:38px;height:22px;background:#c6c2ba;border-left:1px solid #f0eee8;border-top:1px solid #dcd8d0;border-right:1px solid #a8a49c;"></div>
<div class="t" style="left:1147px;top:547.5px;width:38px;text-align:center;">Extra</div>
<div style="left:1230px;top:542px;width:55px;height:22px;background:#c6c2ba;border-left:1px solid #f0eee8;border-top:1px solid #dcd8d0;border-right:1px solid #a8a49c;"></div>
<div class="t" style="left:1230px;top:547.5px;width:55px;text-align:center;">Statistics</div>
<div style="left:1186px;top:539px;width:43px;height:27px;background:#d4d0c8;border-left:1px solid #fff;border-top:1px solid #fff;border-right:1px solid #808080;"></div>
<div class="t" style="left:1186px;top:545.5px;width:43px;text-align:center;">Action</div>
<div style="left:1590px;top:543px;width:104px;height:23px;background:#d4d0c8;border:1px solid #000;box-shadow:inset 1px 1px 0 #fff,inset -1px -1px 0 #808080;"></div>
<div class="t" style="left:1590px;top:548.5px;width:104px;text-align:center;">OK</div>
<div style="left:1590px;top:569px;width:104px;height:23px;background:#d4d0c8;border:1px solid #808080;box-shadow:inset 1px 1px 0 #fff,1px 1px 0 #fff;"></div>
<div class="t" style="left:1590px;top:574.5px;width:104px;text-align:center;">Cancel</div>
<div style="left:1590px;top:595px;width:104px;height:23px;background:#d4d0c8;border:1px solid #808080;box-shadow:inset 1px 1px 0 #fff,1px 1px 0 #fff;"></div>
<div class="t" style="left:1590px;top:600.5px;width:104px;text-align:center;">Apply</div>
<div style="left:1590px;top:626px;width:104px;height:23px;background:#d4d0c8;border:1px solid #808080;box-shadow:inset 1px 1px 0 #fff,1px 1px 0 #fff;"></div>
<div class="t" style="left:1590px;top:631.5px;width:104px;text-align:center;">Disable</div>
<div style="left:1590px;top:652px;width:104px;height:23px;background:#d4d0c8;border:1px solid #808080;box-shadow:inset 1px 1px 0 #fff,1px 1px 0 #fff;"></div>
<div class="t" style="left:1590px;top:657.5px;width:104px;text-align:center;">Comment</div>
<div style="left:1590px;top:678px;width:104px;height:23px;background:#d4d0c8;border:1px solid #808080;box-shadow:inset 1px 1px 0 #fff,1px 1px 0 #fff;"></div>
<div class="t" style="left:1590px;top:683.5px;width:104px;text-align:center;">Copy</div>
<div style="left:1590px;top:704px;width:104px;height:23px;background:#d4d0c8;border:1px solid #808080;box-shadow:inset 1px 1px 0 #fff,1px 1px 0 #fff;"></div>
<div class="t" style="left:1590px;top:709.5px;width:104px;text-align:center;">Remove</div>
<div style="left:1590px;top:730px;width:104px;height:23px;background:#d4d0c8;border:1px solid #808080;box-shadow:inset 1px 1px 0 #fff,1px 1px 0 #fff;"></div>
<div class="t" style="left:1590px;top:735.5px;width:104px;text-align:center;">Reset Counters</div>
<div style="left:1590px;top:756px;width:104px;height:23px;background:#d4d0c8;border:1px solid #808080;box-shadow:inset 1px 1px 0 #fff,1px 1px 0 #fff;"></div>
<div class="t" style="left:1590px;top:761.5px;width:104px;text-align:center;">Reset All Counters</div>
<div style="left:1030px;top:1185px;width:671px;height:21px;background:#d4d0c8;border:1px solid #808080;box-shadow:1px 1px 0 #fff;box-shadow:none;border-color:#808080 #fff #fff #808080;"></div>
<div class="t" style="left:1033px;top:1188.5px;">enabled</div>
<div class="t" style="left:1000px;top:574.4px;width:100px;text-align:right;">Action:</div>
<div style="left:1104px;top:572px;width:450px;height:17px;background:#fff;border:1px solid #808080;box-shadow:1px 1px 0 #fff;"></div>
<div style="left:1105px;top:573px;width:448px;height:15px;background:#0a246a;"></div>
<div class="t" style="left:1107px;top:574.4px;color:#fff;">drop</div>
<div style="left:1555px;top:572px;width:16px;height:17px;background:#d4d0c8;border:1px solid #808080;box-shadow:inset 1px 1px 0 #fff,1px 1px 0 #fff;"></div>
<svg style="left:1557px;top:574px" width="12" height="14" viewBox="0 0 12 14"><rect x="2.5" y="2.6" width="7" height="1.1" fill="#000"/><path d="M4.8 5 H7.2 V7 H9.6 L6 10.6 L2.4 7 H4.8 Z" fill="#000"/></svg>
<div style="left:1037px;top:595px;width:536px;height:1px;background:#eeebe5;"></div>
<div style="left:1037px;top:596px;width:536px;height:1px;background:#a6a19a;"></div>
<div style="left:1104px;top:606px;width:13px;height:13px;background:#fff;border:1px solid;border-color:#808080 #fff #fff #808080;box-shadow:inset 1px 1px 0 #404040,inset -1px -1px 0 #d4d0c8;"></div>
<div class="t" style="left:1120px;top:606.5px;">Log</div>
<div class="t" style="left:1000px;top:628.4px;width:100px;text-align:right;">Log Prefix:</div>
<div style="left:1104px;top:626px;width:450px;height:17px;background:#d4d0c8;border:1px solid #808080;box-shadow:1px 1px 0 #fff;"></div>
<svg style="left:1559px;top:632px" width="11" height="6" viewBox="0 0 11 6"><path d="M0.5 0.5 H10.5 L5.5 5.5 Z" fill="#000"/></svg>
<div style="left:1037px;top:649px;width:536px;height:1px;background:#eeebe5;"></div>
<div style="left:1037px;top:650px;width:536px;height:1px;background:#a6a19a;"></div>
<div style="left:0px;top:1078px;width:1765px;height:2px;background:#f4f3f0;"></div>
</body></html>
